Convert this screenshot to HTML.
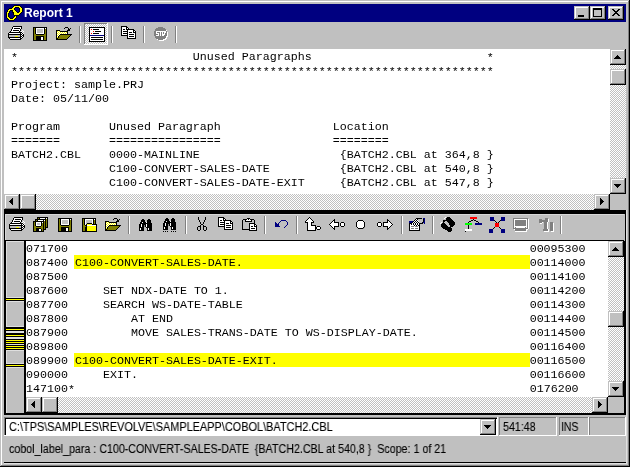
<!DOCTYPE html>
<html><head><meta charset="utf-8">
<style>
*{margin:0;padding:0;box-sizing:border-box}
html,body{width:630px;height:467px;overflow:hidden;background:#c0c0c0}
body{position:relative;font-family:"Liberation Sans",sans-serif;-webkit-font-smoothing:antialiased}
.a{position:absolute}
.mono{position:absolute;will-change:transform;font-family:"Liberation Mono",monospace;font-size:11.67px;line-height:14px;white-space:pre;color:#000}
.dith{background-color:#c0c0c0;background-image:conic-gradient(#fff 0 25%,#c0c0c0 0 50%,#fff 0 75%,#c0c0c0 0);background-size:2px 2px}
.rb{background:#c0c0c0;box-shadow:inset -1px -1px 0 #000,inset 1px 1px 0 #c0c0c0,inset -2px -2px 0 #808080,inset 2px 2px 0 #fff}
.sk{box-shadow:inset -1px -1px 0 #fff,inset 1px 1px 0 #808080}
.ui{position:absolute;white-space:pre;font-size:12px;line-height:14px;color:#000;transform-origin:0 0}
.ui,.tt{will-change:transform}
.ui{-webkit-text-stroke:0.1px #000}
.st{position:relative;top:1px}

svg{position:absolute;shape-rendering:crispEdges;overflow:visible}
</style></head><body>

<div class="a" style="left:0px;top:0px;width:630px;height:1px;background:#c0c0c0"></div><div class="a" style="left:0px;top:0px;width:1px;height:467px;background:#c0c0c0"></div>
<div class="a" style="left:1px;top:1px;width:628px;height:1px;background:#fff"></div><div class="a" style="left:1px;top:1px;width:1px;height:465px;background:#fff"></div>
<div class="a" style="left:629px;top:0px;width:1px;height:467px;background:#000"></div><div class="a" style="left:0px;top:466px;width:630px;height:1px;background:#000"></div>
<div class="a" style="left:628px;top:1px;width:1px;height:465px;background:#808080"></div><div class="a" style="left:1px;top:465px;width:628px;height:1px;background:#808080"></div>
<div class="a" style="left:4px;top:4px;width:622px;height:18px;background:#000080"></div>
<div class="a tt" style="left:24px;top:5px;color:#fff;font-weight:bold;font-size:12px;line-height:16px;white-space:pre">Report 1</div>
<svg style="left:6px;top:5px" width="17" height="16" viewBox="0 0 17 16"><rect x="8" y="0" width="6" height="1" fill="#000"/><rect x="7" y="1" width="1" height="1" fill="#000"/><rect x="8" y="1" width="6" height="1" fill="#ff0"/><rect x="14" y="1" width="1" height="1" fill="#000"/><rect x="6" y="2" width="1" height="1" fill="#000"/><rect x="7" y="2" width="2" height="1" fill="#ff0"/><rect x="9" y="2" width="4" height="1" fill="#000"/><rect x="13" y="2" width="2" height="1" fill="#ff0"/><rect x="15" y="2" width="1" height="1" fill="#000"/><rect x="3" y="3" width="3" height="1" fill="#000"/><rect x="6" y="3" width="2" height="1" fill="#ff0"/><rect x="8" y="3" width="1" height="1" fill="#000"/><rect x="13" y="3" width="1" height="1" fill="#000"/><rect x="14" y="3" width="2" height="1" fill="#ff0"/><rect x="16" y="3" width="1" height="1" fill="#000"/><rect x="2" y="4" width="1" height="1" fill="#000"/><rect x="3" y="4" width="5" height="1" fill="#ff0"/><rect x="8" y="4" width="1" height="1" fill="#000"/><rect x="13" y="4" width="1" height="1" fill="#000"/><rect x="14" y="4" width="2" height="1" fill="#ff0"/><rect x="16" y="4" width="1" height="1" fill="#000"/><rect x="1" y="5" width="1" height="1" fill="#000"/><rect x="2" y="5" width="2" height="1" fill="#ff0"/><rect x="4" y="5" width="3" height="1" fill="#000"/><rect x="7" y="5" width="2" height="1" fill="#ff0"/><rect x="9" y="5" width="1" height="1" fill="#000"/><rect x="13" y="5" width="1" height="1" fill="#000"/><rect x="14" y="5" width="2" height="1" fill="#ff0"/><rect x="16" y="5" width="1" height="1" fill="#000"/><rect x="1" y="6" width="1" height="1" fill="#000"/><rect x="2" y="6" width="1" height="1" fill="#ff0"/><rect x="3" y="6" width="1" height="1" fill="#000"/><rect x="6" y="6" width="1" height="1" fill="#000"/><rect x="7" y="6" width="3" height="1" fill="#ff0"/><rect x="10" y="6" width="1" height="1" fill="#000"/><rect x="13" y="6" width="1" height="1" fill="#000"/><rect x="14" y="6" width="2" height="1" fill="#ff0"/><rect x="16" y="6" width="1" height="1" fill="#000"/><rect x="0" y="7" width="1" height="1" fill="#000"/><rect x="1" y="7" width="2" height="1" fill="#ff0"/><rect x="3" y="7" width="1" height="1" fill="#000"/><rect x="6" y="7" width="2" height="1" fill="#000"/><rect x="8" y="7" width="3" height="1" fill="#ff0"/><rect x="11" y="7" width="2" height="1" fill="#000"/><rect x="13" y="7" width="2" height="1" fill="#ff0"/><rect x="15" y="7" width="1" height="1" fill="#000"/><rect x="0" y="8" width="1" height="1" fill="#000"/><rect x="1" y="8" width="1" height="1" fill="#ff0"/><rect x="2" y="8" width="1" height="1" fill="#000"/><rect x="7" y="8" width="1" height="1" fill="#000"/><rect x="8" y="8" width="6" height="1" fill="#ff0"/><rect x="14" y="8" width="1" height="1" fill="#000"/><rect x="0" y="9" width="1" height="1" fill="#000"/><rect x="1" y="9" width="1" height="1" fill="#ff0"/><rect x="2" y="9" width="1" height="1" fill="#000"/><rect x="7" y="9" width="1" height="1" fill="#000"/><rect x="8" y="9" width="5" height="1" fill="#ff0"/><rect x="13" y="9" width="1" height="1" fill="#000"/><rect x="0" y="10" width="1" height="1" fill="#000"/><rect x="1" y="10" width="1" height="1" fill="#ff0"/><rect x="2" y="10" width="1" height="1" fill="#000"/><rect x="8" y="10" width="5" height="1" fill="#000"/><rect x="0" y="11" width="1" height="1" fill="#000"/><rect x="1" y="11" width="1" height="1" fill="#ff0"/><rect x="2" y="11" width="1" height="1" fill="#000"/><rect x="8" y="11" width="1" height="1" fill="#000"/><rect x="9" y="11" width="1" height="1" fill="#ff0"/><rect x="10" y="11" width="1" height="1" fill="#000"/><rect x="0" y="12" width="1" height="1" fill="#000"/><rect x="1" y="12" width="2" height="1" fill="#ff0"/><rect x="3" y="12" width="1" height="1" fill="#000"/><rect x="7" y="12" width="1" height="1" fill="#000"/><rect x="8" y="12" width="2" height="1" fill="#ff0"/><rect x="10" y="12" width="1" height="1" fill="#000"/><rect x="1" y="13" width="1" height="1" fill="#000"/><rect x="2" y="13" width="2" height="1" fill="#ff0"/><rect x="4" y="13" width="3" height="1" fill="#000"/><rect x="7" y="13" width="2" height="1" fill="#ff0"/><rect x="9" y="13" width="1" height="1" fill="#000"/><rect x="2" y="14" width="1" height="1" fill="#000"/><rect x="3" y="14" width="5" height="1" fill="#ff0"/><rect x="8" y="14" width="1" height="1" fill="#000"/><rect x="3" y="15" width="5" height="1" fill="#000"/></svg>
<div class="a rb" style="left:574px;top:6px;width:16px;height:14px;"></div>
<div class="a rb" style="left:590px;top:6px;width:16px;height:14px;"></div>
<div class="a rb" style="left:608px;top:6px;width:16px;height:14px;"></div>
<div class="a" style="left:578px;top:15px;width:6px;height:2px;background:#000"></div>
<div class="a" style="left:593px;top:8px;width:9px;height:9px;background:#000"></div><div class="a" style="left:594px;top:10px;width:7px;height:6px;background:#c0c0c0"></div>
<svg style="left:612px;top:9px" width="8" height="7" viewBox="0 0 8 7"><rect x="0" y="0" width="2" height="1" fill="#000"/><rect x="6" y="0" width="2" height="1" fill="#000"/><rect x="1" y="1" width="2" height="1" fill="#000"/><rect x="5" y="1" width="2" height="1" fill="#000"/><rect x="2" y="2" width="4" height="1" fill="#000"/><rect x="3" y="3" width="2" height="1" fill="#000"/><rect x="2" y="4" width="4" height="1" fill="#000"/><rect x="1" y="5" width="2" height="1" fill="#000"/><rect x="5" y="5" width="2" height="1" fill="#000"/><rect x="0" y="6" width="2" height="1" fill="#000"/><rect x="6" y="6" width="2" height="1" fill="#000"/></svg>
<svg style="left:8px;top:26px" width="16" height="14" viewBox="0 0 16 14"><rect x="5" y="0" width="9" height="1" fill="#000"/><rect x="4" y="1" width="1" height="1" fill="#000"/><rect x="5" y="1" width="8" height="1" fill="#fff"/><rect x="13" y="1" width="1" height="1" fill="#000"/><rect x="4" y="2" width="1" height="1" fill="#000"/><rect x="5" y="2" width="1" height="1" fill="#fff"/><rect x="6" y="2" width="6" height="1" fill="#000"/><rect x="12" y="2" width="1" height="1" fill="#fff"/><rect x="13" y="2" width="1" height="1" fill="#000"/><rect x="3" y="3" width="1" height="1" fill="#000"/><rect x="4" y="3" width="8" height="1" fill="#fff"/><rect x="12" y="3" width="1" height="1" fill="#000"/><rect x="3" y="4" width="1" height="1" fill="#000"/><rect x="4" y="4" width="1" height="1" fill="#fff"/><rect x="5" y="4" width="6" height="1" fill="#000"/><rect x="11" y="4" width="1" height="1" fill="#fff"/><rect x="12" y="4" width="1" height="1" fill="#000"/><rect x="14" y="4" width="1" height="1" fill="#fff"/><rect x="2" y="5" width="1" height="1" fill="#000"/><rect x="3" y="5" width="8" height="1" fill="#fff"/><rect x="11" y="5" width="1" height="1" fill="#000"/><rect x="13" y="5" width="1" height="1" fill="#fff"/><rect x="15" y="5" width="1" height="1" fill="#fff"/><rect x="1" y="6" width="13" height="1" fill="#000"/><rect x="14" y="6" width="1" height="1" fill="#fff"/><rect x="0" y="7" width="1" height="1" fill="#000"/><rect x="1" y="7" width="11" height="1" fill="#fff"/><rect x="12" y="7" width="1" height="1" fill="#000"/><rect x="13" y="7" width="1" height="1" fill="#fff"/><rect x="14" y="7" width="1" height="1" fill="#000"/><rect x="15" y="7" width="1" height="1" fill="#fff"/><rect x="0" y="8" width="14" height="1" fill="#000"/><rect x="14" y="8" width="1" height="1" fill="#fff"/><rect x="15" y="8" width="1" height="1" fill="#000"/><rect x="0" y="9" width="1" height="1" fill="#000"/><rect x="1" y="9" width="11" height="1" fill="#c0c0c0"/><rect x="12" y="9" width="1" height="1" fill="#000"/><rect x="13" y="9" width="1" height="1" fill="#fff"/><rect x="14" y="9" width="2" height="1" fill="#000"/><rect x="0" y="10" width="1" height="1" fill="#000"/><rect x="1" y="10" width="6" height="1" fill="#c0c0c0"/><rect x="7" y="10" width="3" height="1" fill="#ff0"/><rect x="10" y="10" width="2" height="1" fill="#c0c0c0"/><rect x="12" y="10" width="2" height="1" fill="#000"/><rect x="14" y="10" width="1" height="1" fill="#fff"/><rect x="15" y="10" width="1" height="1" fill="#000"/><rect x="0" y="11" width="13" height="1" fill="#000"/><rect x="13" y="11" width="1" height="1" fill="#fff"/><rect x="14" y="11" width="1" height="1" fill="#000"/><rect x="1" y="12" width="1" height="1" fill="#000"/><rect x="2" y="12" width="10" height="1" fill="#fff"/><rect x="12" y="12" width="2" height="1" fill="#000"/><rect x="2" y="13" width="11" height="1" fill="#000"/></svg>
<svg style="left:33px;top:27px" width="14" height="14" viewBox="0 0 14 14"><rect x="0" y="0" width="14" height="1" fill="#000"/><rect x="0" y="1" width="1" height="1" fill="#000"/><rect x="1" y="1" width="1" height="1" fill="#808000"/><rect x="2" y="1" width="1" height="1" fill="#000"/><rect x="3" y="1" width="8" height="1" fill="#fff"/><rect x="11" y="1" width="1" height="1" fill="#000"/><rect x="12" y="1" width="1" height="1" fill="#fff"/><rect x="13" y="1" width="1" height="1" fill="#000"/><rect x="0" y="2" width="1" height="1" fill="#000"/><rect x="1" y="2" width="1" height="1" fill="#808000"/><rect x="2" y="2" width="1" height="1" fill="#000"/><rect x="3" y="2" width="1" height="1" fill="#fff"/><rect x="4" y="2" width="6" height="1" fill="#c0c0c0"/><rect x="10" y="2" width="1" height="1" fill="#fff"/><rect x="11" y="2" width="1" height="1" fill="#000"/><rect x="12" y="2" width="1" height="1" fill="#808000"/><rect x="13" y="2" width="1" height="1" fill="#000"/><rect x="0" y="3" width="1" height="1" fill="#000"/><rect x="1" y="3" width="1" height="1" fill="#808000"/><rect x="2" y="3" width="1" height="1" fill="#000"/><rect x="3" y="3" width="1" height="1" fill="#fff"/><rect x="4" y="3" width="6" height="1" fill="#c0c0c0"/><rect x="10" y="3" width="1" height="1" fill="#fff"/><rect x="11" y="3" width="1" height="1" fill="#000"/><rect x="12" y="3" width="1" height="1" fill="#808000"/><rect x="13" y="3" width="1" height="1" fill="#000"/><rect x="0" y="4" width="1" height="1" fill="#000"/><rect x="1" y="4" width="1" height="1" fill="#808000"/><rect x="2" y="4" width="1" height="1" fill="#000"/><rect x="3" y="4" width="1" height="1" fill="#fff"/><rect x="4" y="4" width="6" height="1" fill="#c0c0c0"/><rect x="10" y="4" width="1" height="1" fill="#fff"/><rect x="11" y="4" width="1" height="1" fill="#000"/><rect x="12" y="4" width="1" height="1" fill="#808000"/><rect x="13" y="4" width="1" height="1" fill="#000"/><rect x="0" y="5" width="1" height="1" fill="#000"/><rect x="1" y="5" width="1" height="1" fill="#808000"/><rect x="2" y="5" width="1" height="1" fill="#000"/><rect x="3" y="5" width="1" height="1" fill="#fff"/><rect x="4" y="5" width="6" height="1" fill="#c0c0c0"/><rect x="10" y="5" width="1" height="1" fill="#fff"/><rect x="11" y="5" width="1" height="1" fill="#000"/><rect x="12" y="5" width="1" height="1" fill="#808000"/><rect x="13" y="5" width="1" height="1" fill="#000"/><rect x="0" y="6" width="1" height="1" fill="#000"/><rect x="1" y="6" width="1" height="1" fill="#808000"/><rect x="2" y="6" width="1" height="1" fill="#000"/><rect x="3" y="6" width="8" height="1" fill="#fff"/><rect x="11" y="6" width="1" height="1" fill="#000"/><rect x="12" y="6" width="1" height="1" fill="#808000"/><rect x="13" y="6" width="1" height="1" fill="#000"/><rect x="0" y="7" width="1" height="1" fill="#000"/><rect x="1" y="7" width="2" height="1" fill="#808000"/><rect x="3" y="7" width="8" height="1" fill="#000"/><rect x="11" y="7" width="2" height="1" fill="#808000"/><rect x="13" y="7" width="1" height="1" fill="#000"/><rect x="0" y="8" width="1" height="1" fill="#000"/><rect x="1" y="8" width="12" height="1" fill="#808000"/><rect x="13" y="8" width="1" height="1" fill="#000"/><rect x="0" y="9" width="1" height="1" fill="#000"/><rect x="1" y="9" width="2" height="1" fill="#808000"/><rect x="3" y="9" width="8" height="1" fill="#000"/><rect x="11" y="9" width="2" height="1" fill="#808000"/><rect x="13" y="9" width="1" height="1" fill="#000"/><rect x="0" y="10" width="1" height="1" fill="#000"/><rect x="1" y="10" width="2" height="1" fill="#808000"/><rect x="3" y="10" width="5" height="1" fill="#000"/><rect x="8" y="10" width="2" height="1" fill="#fff"/><rect x="10" y="10" width="1" height="1" fill="#000"/><rect x="11" y="10" width="2" height="1" fill="#808000"/><rect x="13" y="10" width="1" height="1" fill="#000"/><rect x="0" y="11" width="1" height="1" fill="#000"/><rect x="1" y="11" width="2" height="1" fill="#808000"/><rect x="3" y="11" width="5" height="1" fill="#000"/><rect x="8" y="11" width="2" height="1" fill="#fff"/><rect x="10" y="11" width="1" height="1" fill="#000"/><rect x="11" y="11" width="2" height="1" fill="#808000"/><rect x="13" y="11" width="1" height="1" fill="#000"/><rect x="0" y="12" width="1" height="1" fill="#000"/><rect x="1" y="12" width="2" height="1" fill="#808000"/><rect x="3" y="12" width="5" height="1" fill="#000"/><rect x="8" y="12" width="2" height="1" fill="#fff"/><rect x="10" y="12" width="1" height="1" fill="#000"/><rect x="11" y="12" width="2" height="1" fill="#808000"/><rect x="13" y="12" width="1" height="1" fill="#000"/><rect x="0" y="13" width="14" height="1" fill="#000"/></svg>
<svg style="left:56px;top:27px" width="16" height="13" viewBox="0 0 16 13"><rect x="9" y="0" width="3" height="1" fill="#000"/><rect x="8" y="1" width="1" height="1" fill="#000"/><rect x="12" y="1" width="1" height="1" fill="#000"/><rect x="14" y="1" width="1" height="1" fill="#000"/><rect x="12" y="2" width="2" height="1" fill="#000"/><rect x="0" y="3" width="4" height="1" fill="#000"/><rect x="11" y="3" width="3" height="1" fill="#000"/><rect x="0" y="4" width="1" height="1" fill="#000"/><rect x="1" y="4" width="1" height="1" fill="#ff0"/><rect x="2" y="4" width="1" height="1" fill="#fff"/><rect x="3" y="4" width="1" height="1" fill="#ff0"/><rect x="4" y="4" width="8" height="1" fill="#000"/><rect x="0" y="5" width="1" height="1" fill="#000"/><rect x="1" y="5" width="1" height="1" fill="#fff"/><rect x="2" y="5" width="1" height="1" fill="#ff0"/><rect x="3" y="5" width="1" height="1" fill="#fff"/><rect x="4" y="5" width="1" height="1" fill="#ff0"/><rect x="5" y="5" width="1" height="1" fill="#fff"/><rect x="6" y="5" width="1" height="1" fill="#ff0"/><rect x="7" y="5" width="1" height="1" fill="#fff"/><rect x="8" y="5" width="1" height="1" fill="#ff0"/><rect x="9" y="5" width="1" height="1" fill="#fff"/><rect x="10" y="5" width="1" height="1" fill="#ff0"/><rect x="11" y="5" width="1" height="1" fill="#000"/><rect x="0" y="6" width="1" height="1" fill="#000"/><rect x="1" y="6" width="1" height="1" fill="#ff0"/><rect x="2" y="6" width="1" height="1" fill="#fff"/><rect x="3" y="6" width="1" height="1" fill="#ff0"/><rect x="4" y="6" width="1" height="1" fill="#fff"/><rect x="5" y="6" width="1" height="1" fill="#ff0"/><rect x="6" y="6" width="1" height="1" fill="#fff"/><rect x="7" y="6" width="1" height="1" fill="#ff0"/><rect x="8" y="6" width="1" height="1" fill="#fff"/><rect x="9" y="6" width="1" height="1" fill="#ff0"/><rect x="10" y="6" width="1" height="1" fill="#fff"/><rect x="11" y="6" width="1" height="1" fill="#000"/><rect x="0" y="7" width="1" height="1" fill="#000"/><rect x="1" y="7" width="1" height="1" fill="#fff"/><rect x="2" y="7" width="1" height="1" fill="#ff0"/><rect x="3" y="7" width="1" height="1" fill="#fff"/><rect x="4" y="7" width="12" height="1" fill="#000"/><rect x="0" y="8" width="1" height="1" fill="#000"/><rect x="1" y="8" width="1" height="1" fill="#ff0"/><rect x="2" y="8" width="1" height="1" fill="#fff"/><rect x="3" y="8" width="1" height="1" fill="#000"/><rect x="4" y="8" width="10" height="1" fill="#808000"/><rect x="14" y="8" width="1" height="1" fill="#000"/><rect x="0" y="9" width="1" height="1" fill="#000"/><rect x="1" y="9" width="1" height="1" fill="#fff"/><rect x="2" y="9" width="1" height="1" fill="#000"/><rect x="3" y="9" width="10" height="1" fill="#808000"/><rect x="13" y="9" width="1" height="1" fill="#000"/><rect x="0" y="10" width="1" height="1" fill="#000"/><rect x="1" y="10" width="1" height="1" fill="#ff0"/><rect x="2" y="10" width="1" height="1" fill="#000"/><rect x="3" y="10" width="9" height="1" fill="#808000"/><rect x="12" y="10" width="1" height="1" fill="#000"/><rect x="0" y="11" width="2" height="1" fill="#000"/><rect x="2" y="11" width="9" height="1" fill="#808000"/><rect x="11" y="11" width="1" height="1" fill="#000"/><rect x="0" y="12" width="11" height="1" fill="#000"/></svg>
<div class="a" style="left:79px;top:26px;width:1px;height:17px;background:#808080"></div><div class="a" style="left:80px;top:26px;width:1px;height:17px;background:#fff"></div>
<div class="a dith" style="left:84px;top:23px;width:24px;height:22px;box-shadow:inset -1px -1px 0 #fff,inset 1px 1px 0 #808080"></div>
<svg style="left:89px;top:27px" width="16" height="15" viewBox="0 0 16 15"><rect x="0" y="0" width="16" height="1" fill="#000"/><rect x="0" y="1" width="1" height="1" fill="#000"/><rect x="1" y="1" width="14" height="1" fill="#fff"/><rect x="15" y="1" width="1" height="1" fill="#000"/><rect x="0" y="2" width="1" height="1" fill="#000"/><rect x="1" y="2" width="1" height="1" fill="#fff"/><rect x="2" y="2" width="1" height="1" fill="#f00"/><rect x="3" y="2" width="1" height="1" fill="#fff"/><rect x="4" y="2" width="6" height="1" fill="#000"/><rect x="10" y="2" width="5" height="1" fill="#fff"/><rect x="15" y="2" width="1" height="1" fill="#000"/><rect x="0" y="3" width="1" height="1" fill="#000"/><rect x="1" y="3" width="14" height="1" fill="#fff"/><rect x="15" y="3" width="1" height="1" fill="#000"/><rect x="0" y="4" width="1" height="1" fill="#000"/><rect x="1" y="4" width="3" height="1" fill="#fff"/><rect x="4" y="4" width="1" height="1" fill="#f00"/><rect x="5" y="4" width="1" height="1" fill="#fff"/><rect x="6" y="4" width="6" height="1" fill="#000"/><rect x="12" y="4" width="3" height="1" fill="#fff"/><rect x="15" y="4" width="1" height="1" fill="#000"/><rect x="0" y="5" width="1" height="1" fill="#000"/><rect x="1" y="5" width="14" height="1" fill="#fff"/><rect x="15" y="5" width="1" height="1" fill="#000"/><rect x="0" y="6" width="1" height="1" fill="#000"/><rect x="1" y="6" width="1" height="1" fill="#fff"/><rect x="2" y="6" width="1" height="1" fill="#f00"/><rect x="3" y="6" width="1" height="1" fill="#fff"/><rect x="4" y="6" width="6" height="1" fill="#000"/><rect x="10" y="6" width="5" height="1" fill="#fff"/><rect x="15" y="6" width="1" height="1" fill="#000"/><rect x="0" y="7" width="1" height="1" fill="#000"/><rect x="1" y="7" width="14" height="1" fill="#fff"/><rect x="15" y="7" width="1" height="1" fill="#000"/><rect x="0" y="8" width="1" height="1" fill="#000"/><rect x="1" y="8" width="14" height="1" fill="#000080"/><rect x="15" y="8" width="1" height="1" fill="#000"/><rect x="0" y="9" width="1" height="1" fill="#000"/><rect x="1" y="9" width="14" height="1" fill="#fff"/><rect x="15" y="9" width="1" height="1" fill="#000"/><rect x="0" y="10" width="1" height="1" fill="#000"/><rect x="1" y="10" width="1" height="1" fill="#fff"/><rect x="2" y="10" width="12" height="1" fill="#000"/><rect x="14" y="10" width="1" height="1" fill="#fff"/><rect x="15" y="10" width="1" height="1" fill="#000"/><rect x="0" y="11" width="1" height="1" fill="#000"/><rect x="1" y="11" width="14" height="1" fill="#fff"/><rect x="15" y="11" width="1" height="1" fill="#000"/><rect x="0" y="12" width="1" height="1" fill="#000"/><rect x="1" y="12" width="1" height="1" fill="#fff"/><rect x="2" y="12" width="12" height="1" fill="#000"/><rect x="14" y="12" width="1" height="1" fill="#fff"/><rect x="15" y="12" width="1" height="1" fill="#000"/><rect x="0" y="13" width="1" height="1" fill="#000"/><rect x="1" y="13" width="14" height="1" fill="#fff"/><rect x="15" y="13" width="1" height="1" fill="#000"/><rect x="0" y="14" width="16" height="1" fill="#000"/></svg>
<div class="a" style="left:111px;top:26px;width:1px;height:17px;background:#808080"></div><div class="a" style="left:112px;top:26px;width:1px;height:17px;background:#fff"></div>
<svg style="left:121px;top:26px" width="15" height="13" viewBox="0 0 15 13"><rect x="0" y="0" width="6" height="1" fill="#000"/><rect x="0" y="1" width="1" height="1" fill="#000"/><rect x="1" y="1" width="4" height="1" fill="#fff"/><rect x="5" y="1" width="2" height="1" fill="#000"/><rect x="0" y="2" width="1" height="1" fill="#000"/><rect x="1" y="2" width="4" height="1" fill="#fff"/><rect x="5" y="2" width="1" height="1" fill="#000"/><rect x="6" y="2" width="1" height="1" fill="#fff"/><rect x="7" y="2" width="1" height="1" fill="#000"/><rect x="0" y="3" width="1" height="1" fill="#000"/><rect x="1" y="3" width="1" height="1" fill="#fff"/><rect x="2" y="3" width="2" height="1" fill="#000"/><rect x="4" y="3" width="1" height="1" fill="#fff"/><rect x="5" y="3" width="8" height="1" fill="#000"/><rect x="0" y="4" width="1" height="1" fill="#000"/><rect x="1" y="4" width="5" height="1" fill="#fff"/><rect x="6" y="4" width="1" height="1" fill="#000"/><rect x="7" y="4" width="5" height="1" fill="#fff"/><rect x="12" y="4" width="2" height="1" fill="#000"/><rect x="0" y="5" width="1" height="1" fill="#000"/><rect x="1" y="5" width="1" height="1" fill="#fff"/><rect x="2" y="5" width="5" height="1" fill="#000"/><rect x="7" y="5" width="5" height="1" fill="#fff"/><rect x="12" y="5" width="1" height="1" fill="#000"/><rect x="13" y="5" width="1" height="1" fill="#fff"/><rect x="14" y="5" width="1" height="1" fill="#000"/><rect x="0" y="6" width="1" height="1" fill="#000"/><rect x="1" y="6" width="5" height="1" fill="#fff"/><rect x="6" y="6" width="1" height="1" fill="#000"/><rect x="7" y="6" width="1" height="1" fill="#fff"/><rect x="8" y="6" width="3" height="1" fill="#000"/><rect x="11" y="6" width="1" height="1" fill="#fff"/><rect x="12" y="6" width="3" height="1" fill="#000"/><rect x="0" y="7" width="1" height="1" fill="#000"/><rect x="1" y="7" width="1" height="1" fill="#fff"/><rect x="2" y="7" width="5" height="1" fill="#000"/><rect x="7" y="7" width="7" height="1" fill="#fff"/><rect x="14" y="7" width="1" height="1" fill="#000"/><rect x="0" y="8" width="1" height="1" fill="#000"/><rect x="1" y="8" width="5" height="1" fill="#fff"/><rect x="6" y="8" width="1" height="1" fill="#000"/><rect x="7" y="8" width="1" height="1" fill="#fff"/><rect x="8" y="8" width="5" height="1" fill="#000"/><rect x="13" y="8" width="1" height="1" fill="#fff"/><rect x="14" y="8" width="1" height="1" fill="#000"/><rect x="0" y="9" width="7" height="1" fill="#000"/><rect x="7" y="9" width="7" height="1" fill="#fff"/><rect x="14" y="9" width="1" height="1" fill="#000"/><rect x="6" y="10" width="1" height="1" fill="#000"/><rect x="7" y="10" width="1" height="1" fill="#fff"/><rect x="8" y="10" width="5" height="1" fill="#000"/><rect x="13" y="10" width="1" height="1" fill="#fff"/><rect x="14" y="10" width="1" height="1" fill="#000"/><rect x="6" y="11" width="1" height="1" fill="#000"/><rect x="7" y="11" width="7" height="1" fill="#fff"/><rect x="14" y="11" width="1" height="1" fill="#000"/><rect x="6" y="12" width="9" height="1" fill="#000"/></svg>
<div class="a" style="left:143px;top:26px;width:1px;height:17px;background:#808080"></div><div class="a" style="left:144px;top:26px;width:1px;height:17px;background:#fff"></div>
<svg style="left:154px;top:27px" width="14" height="14" viewBox="0 0 14 14"><rect x="4" y="0" width="5" height="1" fill="#808080"/><rect x="2" y="1" width="9" height="1" fill="#808080"/><rect x="1" y="2" width="11" height="1" fill="#808080"/><rect x="1" y="3" width="11" height="1" fill="#808080"/><rect x="12" y="3" width="1" height="1" fill="#fff"/><rect x="0" y="4" width="2" height="1" fill="#808080"/><rect x="2" y="4" width="10" height="1" fill="#fff"/><rect x="12" y="4" width="1" height="1" fill="#808080"/><rect x="0" y="5" width="2" height="1" fill="#808080"/><rect x="2" y="5" width="1" height="1" fill="#fff"/><rect x="3" y="5" width="3" height="1" fill="#808080"/><rect x="6" y="5" width="1" height="1" fill="#fff"/><rect x="7" y="5" width="1" height="1" fill="#808080"/><rect x="8" y="5" width="1" height="1" fill="#fff"/><rect x="9" y="5" width="1" height="1" fill="#808080"/><rect x="10" y="5" width="2" height="1" fill="#fff"/><rect x="12" y="5" width="1" height="1" fill="#808080"/><rect x="13" y="5" width="1" height="1" fill="#fff"/><rect x="0" y="6" width="2" height="1" fill="#808080"/><rect x="2" y="6" width="3" height="1" fill="#fff"/><rect x="5" y="6" width="1" height="1" fill="#808080"/><rect x="6" y="6" width="1" height="1" fill="#fff"/><rect x="7" y="6" width="1" height="1" fill="#808080"/><rect x="8" y="6" width="1" height="1" fill="#fff"/><rect x="9" y="6" width="1" height="1" fill="#808080"/><rect x="10" y="6" width="1" height="1" fill="#fff"/><rect x="11" y="6" width="2" height="1" fill="#808080"/><rect x="13" y="6" width="1" height="1" fill="#fff"/><rect x="0" y="7" width="4" height="1" fill="#808080"/><rect x="4" y="7" width="1" height="1" fill="#fff"/><rect x="5" y="7" width="1" height="1" fill="#808080"/><rect x="6" y="7" width="1" height="1" fill="#fff"/><rect x="7" y="7" width="1" height="1" fill="#808080"/><rect x="8" y="7" width="3" height="1" fill="#fff"/><rect x="11" y="7" width="2" height="1" fill="#808080"/><rect x="13" y="7" width="1" height="1" fill="#fff"/><rect x="0" y="8" width="2" height="1" fill="#808080"/><rect x="2" y="8" width="3" height="1" fill="#fff"/><rect x="5" y="8" width="1" height="1" fill="#808080"/><rect x="6" y="8" width="1" height="1" fill="#fff"/><rect x="7" y="8" width="1" height="1" fill="#808080"/><rect x="8" y="8" width="2" height="1" fill="#fff"/><rect x="10" y="8" width="3" height="1" fill="#808080"/><rect x="13" y="8" width="1" height="1" fill="#fff"/><rect x="1" y="9" width="11" height="1" fill="#808080"/><rect x="12" y="9" width="2" height="1" fill="#fff"/><rect x="1" y="10" width="11" height="1" fill="#808080"/><rect x="12" y="10" width="1" height="1" fill="#fff"/><rect x="2" y="11" width="9" height="1" fill="#808080"/><rect x="11" y="11" width="2" height="1" fill="#fff"/><rect x="3" y="12" width="1" height="1" fill="#fff"/><rect x="4" y="12" width="5" height="1" fill="#808080"/><rect x="9" y="12" width="3" height="1" fill="#fff"/><rect x="5" y="13" width="5" height="1" fill="#fff"/></svg>
<div class="a" style="left:175px;top:26px;width:1px;height:17px;background:#808080"></div><div class="a" style="left:176px;top:26px;width:1px;height:17px;background:#fff"></div>
<div class="a" style="left:4px;top:49px;width:606px;height:145px;background:#fff"></div>
<div class="mono" style="left:11px;top:50px"><span class="st">*</span>                         Unused Paragraphs                         <span class="st">*</span>
<span class="st">*********************************************************************</span>
Project: sample.PRJ
Date: 05/11/00

Program       Unused Paragraph                Location
=======       ================                ========
BATCH2.CBL    0000-MAINLINE                    {BATCH2.CBL at 364,8 }
              C100-CONVERT-SALES-DATE          {BATCH2.CBL at 540,8 }
              C100-CONVERT-SALES-DATE-EXIT     {BATCH2.CBL at 547,8 }</div>
<div class="a dith" style="left:610px;top:49px;width:16px;height:145px"></div>
<div class="a rb" style="left:610px;top:49px;width:16px;height:16px;"></div><svg style="left:614px;top:55px" width="7" height="4" viewBox="0 0 7 4"><rect x="3" y="0" width="1" height="1" fill="#000"/><rect x="2" y="1" width="3" height="1" fill="#000"/><rect x="1" y="2" width="5" height="1" fill="#000"/><rect x="0" y="3" width="7" height="1" fill="#000"/></svg>
<div class="a rb" style="left:610px;top:69px;width:16px;height:16px;"></div>
<div class="a rb" style="left:610px;top:178px;width:16px;height:16px;"></div><svg style="left:614px;top:184px" width="7" height="4" viewBox="0 0 7 4"><rect x="0" y="0" width="7" height="1" fill="#000"/><rect x="1" y="1" width="5" height="1" fill="#000"/><rect x="2" y="2" width="3" height="1" fill="#000"/><rect x="3" y="3" width="1" height="1" fill="#000"/></svg>
<div class="a dith" style="left:4px;top:194px;width:606px;height:16px"></div>
<div class="a rb" style="left:4px;top:194px;width:16px;height:16px;"></div><svg style="left:9px;top:198px" width="4" height="7" viewBox="0 0 4 7"><rect x="3" y="0" width="1" height="1" fill="#000"/><rect x="2" y="1" width="2" height="1" fill="#000"/><rect x="1" y="2" width="3" height="1" fill="#000"/><rect x="0" y="3" width="4" height="1" fill="#000"/><rect x="1" y="4" width="3" height="1" fill="#000"/><rect x="2" y="5" width="2" height="1" fill="#000"/><rect x="3" y="6" width="1" height="1" fill="#000"/></svg>
<div class="a rb" style="left:20px;top:194px;width:16px;height:16px;"></div>
<div class="a rb" style="left:594px;top:194px;width:16px;height:16px;"></div><svg style="left:600px;top:198px" width="4" height="7" viewBox="0 0 4 7"><rect x="0" y="0" width="1" height="1" fill="#000"/><rect x="0" y="1" width="2" height="1" fill="#000"/><rect x="0" y="2" width="3" height="1" fill="#000"/><rect x="0" y="3" width="4" height="1" fill="#000"/><rect x="0" y="4" width="3" height="1" fill="#000"/><rect x="0" y="5" width="2" height="1" fill="#000"/><rect x="0" y="6" width="1" height="1" fill="#000"/></svg>
<div class="a" style="left:610px;top:194px;width:16px;height:16px;background:#c0c0c0"></div>
<div class="a" style="left:4px;top:210px;width:622px;height:4px;background:#000"></div>
<div class="a" style="left:4px;top:210px;width:1px;height:205px;background:#000"></div>
<div class="a" style="left:625px;top:214px;width:1px;height:201px;background:#000"></div><div class="a" style="left:624px;top:241px;width:1px;height:174px;background:#000"></div>
<div class="a" style="left:5px;top:214px;width:619px;height:1px;background:#d8d8d8"></div><div class="a" style="left:5px;top:214px;width:1px;height:26px;background:#d8d8d8"></div>
<svg style="left:9px;top:217px" width="16" height="14" viewBox="0 0 16 14"><rect x="5" y="0" width="9" height="1" fill="#000"/><rect x="4" y="1" width="1" height="1" fill="#000"/><rect x="5" y="1" width="8" height="1" fill="#fff"/><rect x="13" y="1" width="1" height="1" fill="#000"/><rect x="4" y="2" width="1" height="1" fill="#000"/><rect x="5" y="2" width="1" height="1" fill="#fff"/><rect x="6" y="2" width="6" height="1" fill="#000"/><rect x="12" y="2" width="1" height="1" fill="#fff"/><rect x="13" y="2" width="1" height="1" fill="#000"/><rect x="3" y="3" width="1" height="1" fill="#000"/><rect x="4" y="3" width="8" height="1" fill="#fff"/><rect x="12" y="3" width="1" height="1" fill="#000"/><rect x="3" y="4" width="1" height="1" fill="#000"/><rect x="4" y="4" width="1" height="1" fill="#fff"/><rect x="5" y="4" width="6" height="1" fill="#000"/><rect x="11" y="4" width="1" height="1" fill="#fff"/><rect x="12" y="4" width="1" height="1" fill="#000"/><rect x="14" y="4" width="1" height="1" fill="#fff"/><rect x="2" y="5" width="1" height="1" fill="#000"/><rect x="3" y="5" width="8" height="1" fill="#fff"/><rect x="11" y="5" width="1" height="1" fill="#000"/><rect x="13" y="5" width="1" height="1" fill="#fff"/><rect x="15" y="5" width="1" height="1" fill="#fff"/><rect x="1" y="6" width="13" height="1" fill="#000"/><rect x="14" y="6" width="1" height="1" fill="#fff"/><rect x="0" y="7" width="1" height="1" fill="#000"/><rect x="1" y="7" width="11" height="1" fill="#fff"/><rect x="12" y="7" width="1" height="1" fill="#000"/><rect x="13" y="7" width="1" height="1" fill="#fff"/><rect x="14" y="7" width="1" height="1" fill="#000"/><rect x="15" y="7" width="1" height="1" fill="#fff"/><rect x="0" y="8" width="14" height="1" fill="#000"/><rect x="14" y="8" width="1" height="1" fill="#fff"/><rect x="15" y="8" width="1" height="1" fill="#000"/><rect x="0" y="9" width="1" height="1" fill="#000"/><rect x="1" y="9" width="11" height="1" fill="#c0c0c0"/><rect x="12" y="9" width="1" height="1" fill="#000"/><rect x="13" y="9" width="1" height="1" fill="#fff"/><rect x="14" y="9" width="2" height="1" fill="#000"/><rect x="0" y="10" width="1" height="1" fill="#000"/><rect x="1" y="10" width="6" height="1" fill="#c0c0c0"/><rect x="7" y="10" width="3" height="1" fill="#ff0"/><rect x="10" y="10" width="2" height="1" fill="#c0c0c0"/><rect x="12" y="10" width="2" height="1" fill="#000"/><rect x="14" y="10" width="1" height="1" fill="#fff"/><rect x="15" y="10" width="1" height="1" fill="#000"/><rect x="0" y="11" width="13" height="1" fill="#000"/><rect x="13" y="11" width="1" height="1" fill="#fff"/><rect x="14" y="11" width="1" height="1" fill="#000"/><rect x="1" y="12" width="1" height="1" fill="#000"/><rect x="2" y="12" width="10" height="1" fill="#fff"/><rect x="12" y="12" width="2" height="1" fill="#000"/><rect x="2" y="13" width="11" height="1" fill="#000"/></svg>
<svg style="left:33px;top:217px" width="15" height="15" viewBox="0 0 15 15"><rect x="4" y="0" width="11" height="1" fill="#000"/><rect x="4" y="1" width="1" height="1" fill="#000"/><rect x="5" y="1" width="1" height="1" fill="#808000"/><rect x="6" y="1" width="1" height="1" fill="#000"/><rect x="7" y="1" width="5" height="1" fill="#fff"/><rect x="12" y="1" width="1" height="1" fill="#000"/><rect x="13" y="1" width="1" height="1" fill="#fff"/><rect x="14" y="1" width="1" height="1" fill="#000"/><rect x="2" y="2" width="11" height="1" fill="#000"/><rect x="13" y="2" width="1" height="1" fill="#808000"/><rect x="14" y="2" width="1" height="1" fill="#000"/><rect x="2" y="3" width="1" height="1" fill="#000"/><rect x="3" y="3" width="1" height="1" fill="#808000"/><rect x="4" y="3" width="1" height="1" fill="#000"/><rect x="5" y="3" width="5" height="1" fill="#fff"/><rect x="10" y="3" width="1" height="1" fill="#000"/><rect x="11" y="3" width="1" height="1" fill="#fff"/><rect x="12" y="3" width="1" height="1" fill="#000"/><rect x="13" y="3" width="1" height="1" fill="#808000"/><rect x="14" y="3" width="1" height="1" fill="#000"/><rect x="0" y="4" width="11" height="1" fill="#000"/><rect x="11" y="4" width="1" height="1" fill="#808000"/><rect x="12" y="4" width="1" height="1" fill="#000"/><rect x="13" y="4" width="1" height="1" fill="#808000"/><rect x="14" y="4" width="1" height="1" fill="#000"/><rect x="0" y="5" width="1" height="1" fill="#000"/><rect x="1" y="5" width="1" height="1" fill="#808000"/><rect x="2" y="5" width="1" height="1" fill="#000"/><rect x="3" y="5" width="5" height="1" fill="#fff"/><rect x="8" y="5" width="1" height="1" fill="#000"/><rect x="9" y="5" width="1" height="1" fill="#fff"/><rect x="10" y="5" width="1" height="1" fill="#000"/><rect x="11" y="5" width="1" height="1" fill="#808000"/><rect x="12" y="5" width="1" height="1" fill="#000"/><rect x="13" y="5" width="1" height="1" fill="#808000"/><rect x="14" y="5" width="1" height="1" fill="#000"/><rect x="0" y="6" width="1" height="1" fill="#000"/><rect x="1" y="6" width="1" height="1" fill="#808000"/><rect x="2" y="6" width="1" height="1" fill="#000"/><rect x="3" y="6" width="1" height="1" fill="#fff"/><rect x="4" y="6" width="3" height="1" fill="#c0c0c0"/><rect x="7" y="6" width="1" height="1" fill="#fff"/><rect x="8" y="6" width="1" height="1" fill="#000"/><rect x="9" y="6" width="1" height="1" fill="#808000"/><rect x="10" y="6" width="1" height="1" fill="#000"/><rect x="11" y="6" width="1" height="1" fill="#808000"/><rect x="12" y="6" width="1" height="1" fill="#000"/><rect x="13" y="6" width="1" height="1" fill="#808000"/><rect x="14" y="6" width="1" height="1" fill="#000"/><rect x="0" y="7" width="1" height="1" fill="#000"/><rect x="1" y="7" width="1" height="1" fill="#808000"/><rect x="2" y="7" width="1" height="1" fill="#000"/><rect x="3" y="7" width="1" height="1" fill="#fff"/><rect x="4" y="7" width="3" height="1" fill="#c0c0c0"/><rect x="7" y="7" width="1" height="1" fill="#fff"/><rect x="8" y="7" width="1" height="1" fill="#000"/><rect x="9" y="7" width="1" height="1" fill="#808000"/><rect x="10" y="7" width="1" height="1" fill="#000"/><rect x="11" y="7" width="1" height="1" fill="#808000"/><rect x="12" y="7" width="1" height="1" fill="#000"/><rect x="13" y="7" width="1" height="1" fill="#808000"/><rect x="14" y="7" width="1" height="1" fill="#000"/><rect x="0" y="8" width="1" height="1" fill="#000"/><rect x="1" y="8" width="1" height="1" fill="#808000"/><rect x="2" y="8" width="1" height="1" fill="#000"/><rect x="3" y="8" width="5" height="1" fill="#fff"/><rect x="8" y="8" width="1" height="1" fill="#000"/><rect x="9" y="8" width="1" height="1" fill="#808000"/><rect x="10" y="8" width="1" height="1" fill="#000"/><rect x="11" y="8" width="1" height="1" fill="#808000"/><rect x="12" y="8" width="1" height="1" fill="#000"/><rect x="13" y="8" width="1" height="1" fill="#808000"/><rect x="14" y="8" width="1" height="1" fill="#000"/><rect x="0" y="9" width="1" height="1" fill="#000"/><rect x="1" y="9" width="2" height="1" fill="#808000"/><rect x="3" y="9" width="5" height="1" fill="#000"/><rect x="8" y="9" width="2" height="1" fill="#808000"/><rect x="10" y="9" width="1" height="1" fill="#000"/><rect x="11" y="9" width="1" height="1" fill="#808000"/><rect x="12" y="9" width="1" height="1" fill="#000"/><rect x="13" y="9" width="1" height="1" fill="#808000"/><rect x="14" y="9" width="1" height="1" fill="#000"/><rect x="0" y="10" width="1" height="1" fill="#000"/><rect x="1" y="10" width="9" height="1" fill="#808000"/><rect x="10" y="10" width="1" height="1" fill="#000"/><rect x="11" y="10" width="1" height="1" fill="#808000"/><rect x="12" y="10" width="3" height="1" fill="#000"/><rect x="0" y="11" width="1" height="1" fill="#000"/><rect x="1" y="11" width="2" height="1" fill="#808000"/><rect x="3" y="11" width="5" height="1" fill="#000"/><rect x="8" y="11" width="2" height="1" fill="#808000"/><rect x="10" y="11" width="1" height="1" fill="#000"/><rect x="11" y="11" width="1" height="1" fill="#808000"/><rect x="12" y="11" width="1" height="1" fill="#000"/><rect x="0" y="12" width="1" height="1" fill="#000"/><rect x="1" y="12" width="2" height="1" fill="#808000"/><rect x="3" y="12" width="3" height="1" fill="#000"/><rect x="6" y="12" width="2" height="1" fill="#fff"/><rect x="8" y="12" width="1" height="1" fill="#000"/><rect x="9" y="12" width="1" height="1" fill="#808000"/><rect x="10" y="12" width="3" height="1" fill="#000"/><rect x="0" y="13" width="1" height="1" fill="#000"/><rect x="1" y="13" width="2" height="1" fill="#808000"/><rect x="3" y="13" width="3" height="1" fill="#000"/><rect x="6" y="13" width="2" height="1" fill="#fff"/><rect x="8" y="13" width="1" height="1" fill="#000"/><rect x="9" y="13" width="1" height="1" fill="#808000"/><rect x="10" y="13" width="1" height="1" fill="#000"/><rect x="0" y="14" width="11" height="1" fill="#000"/></svg>
<svg style="left:58px;top:218px" width="14" height="14" viewBox="0 0 14 14"><rect x="0" y="0" width="14" height="1" fill="#000"/><rect x="0" y="1" width="1" height="1" fill="#000"/><rect x="1" y="1" width="1" height="1" fill="#808000"/><rect x="2" y="1" width="1" height="1" fill="#000"/><rect x="3" y="1" width="8" height="1" fill="#fff"/><rect x="11" y="1" width="1" height="1" fill="#000"/><rect x="12" y="1" width="1" height="1" fill="#fff"/><rect x="13" y="1" width="1" height="1" fill="#000"/><rect x="0" y="2" width="1" height="1" fill="#000"/><rect x="1" y="2" width="1" height="1" fill="#808000"/><rect x="2" y="2" width="1" height="1" fill="#000"/><rect x="3" y="2" width="1" height="1" fill="#fff"/><rect x="4" y="2" width="6" height="1" fill="#c0c0c0"/><rect x="10" y="2" width="1" height="1" fill="#fff"/><rect x="11" y="2" width="1" height="1" fill="#000"/><rect x="12" y="2" width="1" height="1" fill="#808000"/><rect x="13" y="2" width="1" height="1" fill="#000"/><rect x="0" y="3" width="1" height="1" fill="#000"/><rect x="1" y="3" width="1" height="1" fill="#808000"/><rect x="2" y="3" width="1" height="1" fill="#000"/><rect x="3" y="3" width="1" height="1" fill="#fff"/><rect x="4" y="3" width="6" height="1" fill="#c0c0c0"/><rect x="10" y="3" width="1" height="1" fill="#fff"/><rect x="11" y="3" width="1" height="1" fill="#000"/><rect x="12" y="3" width="1" height="1" fill="#808000"/><rect x="13" y="3" width="1" height="1" fill="#000"/><rect x="0" y="4" width="1" height="1" fill="#000"/><rect x="1" y="4" width="1" height="1" fill="#808000"/><rect x="2" y="4" width="1" height="1" fill="#000"/><rect x="3" y="4" width="1" height="1" fill="#fff"/><rect x="4" y="4" width="6" height="1" fill="#c0c0c0"/><rect x="10" y="4" width="1" height="1" fill="#fff"/><rect x="11" y="4" width="1" height="1" fill="#000"/><rect x="12" y="4" width="1" height="1" fill="#808000"/><rect x="13" y="4" width="1" height="1" fill="#000"/><rect x="0" y="5" width="1" height="1" fill="#000"/><rect x="1" y="5" width="1" height="1" fill="#808000"/><rect x="2" y="5" width="1" height="1" fill="#000"/><rect x="3" y="5" width="1" height="1" fill="#fff"/><rect x="4" y="5" width="6" height="1" fill="#c0c0c0"/><rect x="10" y="5" width="1" height="1" fill="#fff"/><rect x="11" y="5" width="1" height="1" fill="#000"/><rect x="12" y="5" width="1" height="1" fill="#808000"/><rect x="13" y="5" width="1" height="1" fill="#000"/><rect x="0" y="6" width="1" height="1" fill="#000"/><rect x="1" y="6" width="1" height="1" fill="#808000"/><rect x="2" y="6" width="1" height="1" fill="#000"/><rect x="3" y="6" width="8" height="1" fill="#fff"/><rect x="11" y="6" width="1" height="1" fill="#000"/><rect x="12" y="6" width="1" height="1" fill="#808000"/><rect x="13" y="6" width="1" height="1" fill="#000"/><rect x="0" y="7" width="1" height="1" fill="#000"/><rect x="1" y="7" width="2" height="1" fill="#808000"/><rect x="3" y="7" width="8" height="1" fill="#000"/><rect x="11" y="7" width="2" height="1" fill="#808000"/><rect x="13" y="7" width="1" height="1" fill="#000"/><rect x="0" y="8" width="1" height="1" fill="#000"/><rect x="1" y="8" width="12" height="1" fill="#808000"/><rect x="13" y="8" width="1" height="1" fill="#000"/><rect x="0" y="9" width="1" height="1" fill="#000"/><rect x="1" y="9" width="2" height="1" fill="#808000"/><rect x="3" y="9" width="8" height="1" fill="#000"/><rect x="11" y="9" width="2" height="1" fill="#808000"/><rect x="13" y="9" width="1" height="1" fill="#000"/><rect x="0" y="10" width="1" height="1" fill="#000"/><rect x="1" y="10" width="2" height="1" fill="#808000"/><rect x="3" y="10" width="5" height="1" fill="#000"/><rect x="8" y="10" width="2" height="1" fill="#fff"/><rect x="10" y="10" width="1" height="1" fill="#000"/><rect x="11" y="10" width="2" height="1" fill="#808000"/><rect x="13" y="10" width="1" height="1" fill="#000"/><rect x="0" y="11" width="1" height="1" fill="#000"/><rect x="1" y="11" width="2" height="1" fill="#808000"/><rect x="3" y="11" width="5" height="1" fill="#000"/><rect x="8" y="11" width="2" height="1" fill="#fff"/><rect x="10" y="11" width="1" height="1" fill="#000"/><rect x="11" y="11" width="2" height="1" fill="#808000"/><rect x="13" y="11" width="1" height="1" fill="#000"/><rect x="0" y="12" width="1" height="1" fill="#000"/><rect x="1" y="12" width="2" height="1" fill="#808000"/><rect x="3" y="12" width="5" height="1" fill="#000"/><rect x="8" y="12" width="2" height="1" fill="#fff"/><rect x="10" y="12" width="1" height="1" fill="#000"/><rect x="11" y="12" width="2" height="1" fill="#808000"/><rect x="13" y="12" width="1" height="1" fill="#000"/><rect x="0" y="13" width="14" height="1" fill="#000"/></svg>
<svg style="left:82px;top:218px" width="15" height="14" viewBox="0 0 15 14"><rect x="0" y="0" width="14" height="1" fill="#000"/><rect x="0" y="1" width="1" height="1" fill="#000"/><rect x="1" y="1" width="1" height="1" fill="#808000"/><rect x="2" y="1" width="1" height="1" fill="#000"/><rect x="3" y="1" width="8" height="1" fill="#fff"/><rect x="11" y="1" width="1" height="1" fill="#000"/><rect x="12" y="1" width="1" height="1" fill="#fff"/><rect x="13" y="1" width="1" height="1" fill="#000"/><rect x="0" y="2" width="1" height="1" fill="#000"/><rect x="1" y="2" width="1" height="1" fill="#808000"/><rect x="2" y="2" width="1" height="1" fill="#000"/><rect x="3" y="2" width="1" height="1" fill="#fff"/><rect x="4" y="2" width="6" height="1" fill="#c0c0c0"/><rect x="10" y="2" width="1" height="1" fill="#fff"/><rect x="11" y="2" width="1" height="1" fill="#000"/><rect x="12" y="2" width="1" height="1" fill="#808000"/><rect x="13" y="2" width="1" height="1" fill="#000"/><rect x="0" y="3" width="1" height="1" fill="#000"/><rect x="1" y="3" width="1" height="1" fill="#808000"/><rect x="2" y="3" width="1" height="1" fill="#000"/><rect x="3" y="3" width="1" height="1" fill="#fff"/><rect x="4" y="3" width="6" height="1" fill="#c0c0c0"/><rect x="10" y="3" width="1" height="1" fill="#fff"/><rect x="11" y="3" width="1" height="1" fill="#000"/><rect x="12" y="3" width="1" height="1" fill="#808000"/><rect x="13" y="3" width="1" height="1" fill="#000"/><rect x="0" y="4" width="1" height="1" fill="#000"/><rect x="1" y="4" width="1" height="1" fill="#808000"/><rect x="2" y="4" width="1" height="1" fill="#000"/><rect x="3" y="4" width="1" height="1" fill="#fff"/><rect x="4" y="4" width="6" height="1" fill="#c0c0c0"/><rect x="10" y="4" width="1" height="1" fill="#fff"/><rect x="11" y="4" width="1" height="1" fill="#000"/><rect x="12" y="4" width="1" height="1" fill="#808000"/><rect x="13" y="4" width="1" height="1" fill="#000"/><rect x="0" y="5" width="1" height="1" fill="#000"/><rect x="1" y="5" width="1" height="1" fill="#808000"/><rect x="2" y="5" width="1" height="1" fill="#000"/><rect x="3" y="5" width="1" height="1" fill="#fff"/><rect x="4" y="5" width="1" height="1" fill="#c0c0c0"/><rect x="5" y="5" width="5" height="1" fill="#000"/><rect x="10" y="5" width="1" height="1" fill="#fff"/><rect x="11" y="5" width="1" height="1" fill="#000"/><rect x="12" y="5" width="1" height="1" fill="#808000"/><rect x="13" y="5" width="1" height="1" fill="#000"/><rect x="0" y="6" width="1" height="1" fill="#000"/><rect x="1" y="6" width="1" height="1" fill="#808000"/><rect x="2" y="6" width="1" height="1" fill="#000"/><rect x="3" y="6" width="1" height="1" fill="#fff"/><rect x="4" y="6" width="1" height="1" fill="#000"/><rect x="5" y="6" width="5" height="1" fill="#ff0"/><rect x="10" y="6" width="5" height="1" fill="#000"/><rect x="0" y="7" width="1" height="1" fill="#000"/><rect x="1" y="7" width="2" height="1" fill="#808000"/><rect x="3" y="7" width="2" height="1" fill="#000"/><rect x="5" y="7" width="9" height="1" fill="#fff"/><rect x="14" y="7" width="1" height="1" fill="#000"/><rect x="0" y="8" width="1" height="1" fill="#000"/><rect x="1" y="8" width="3" height="1" fill="#808000"/><rect x="4" y="8" width="1" height="1" fill="#000"/><rect x="5" y="8" width="9" height="1" fill="#ff0"/><rect x="14" y="8" width="1" height="1" fill="#000"/><rect x="0" y="9" width="1" height="1" fill="#000"/><rect x="1" y="9" width="2" height="1" fill="#808000"/><rect x="3" y="9" width="2" height="1" fill="#000"/><rect x="5" y="9" width="9" height="1" fill="#ff0"/><rect x="14" y="9" width="1" height="1" fill="#000"/><rect x="0" y="10" width="1" height="1" fill="#000"/><rect x="1" y="10" width="2" height="1" fill="#808000"/><rect x="3" y="10" width="2" height="1" fill="#000"/><rect x="5" y="10" width="9" height="1" fill="#ff0"/><rect x="14" y="10" width="1" height="1" fill="#000"/><rect x="0" y="11" width="1" height="1" fill="#000"/><rect x="1" y="11" width="2" height="1" fill="#808000"/><rect x="3" y="11" width="2" height="1" fill="#000"/><rect x="5" y="11" width="9" height="1" fill="#ff0"/><rect x="14" y="11" width="1" height="1" fill="#000"/><rect x="0" y="12" width="1" height="1" fill="#000"/><rect x="1" y="12" width="2" height="1" fill="#808000"/><rect x="3" y="12" width="2" height="1" fill="#000"/><rect x="5" y="12" width="9" height="1" fill="#ff0"/><rect x="14" y="12" width="1" height="1" fill="#000"/><rect x="0" y="13" width="15" height="1" fill="#000"/></svg>
<svg style="left:105px;top:218px" width="16" height="13" viewBox="0 0 16 13"><rect x="9" y="0" width="3" height="1" fill="#000"/><rect x="8" y="1" width="1" height="1" fill="#000"/><rect x="12" y="1" width="1" height="1" fill="#000"/><rect x="14" y="1" width="1" height="1" fill="#000"/><rect x="12" y="2" width="2" height="1" fill="#000"/><rect x="0" y="3" width="4" height="1" fill="#000"/><rect x="11" y="3" width="3" height="1" fill="#000"/><rect x="0" y="4" width="1" height="1" fill="#000"/><rect x="1" y="4" width="1" height="1" fill="#ff0"/><rect x="2" y="4" width="1" height="1" fill="#fff"/><rect x="3" y="4" width="1" height="1" fill="#ff0"/><rect x="4" y="4" width="8" height="1" fill="#000"/><rect x="0" y="5" width="1" height="1" fill="#000"/><rect x="1" y="5" width="1" height="1" fill="#fff"/><rect x="2" y="5" width="1" height="1" fill="#ff0"/><rect x="3" y="5" width="1" height="1" fill="#fff"/><rect x="4" y="5" width="1" height="1" fill="#ff0"/><rect x="5" y="5" width="1" height="1" fill="#fff"/><rect x="6" y="5" width="1" height="1" fill="#ff0"/><rect x="7" y="5" width="1" height="1" fill="#fff"/><rect x="8" y="5" width="1" height="1" fill="#ff0"/><rect x="9" y="5" width="1" height="1" fill="#fff"/><rect x="10" y="5" width="1" height="1" fill="#ff0"/><rect x="11" y="5" width="1" height="1" fill="#000"/><rect x="0" y="6" width="1" height="1" fill="#000"/><rect x="1" y="6" width="1" height="1" fill="#ff0"/><rect x="2" y="6" width="1" height="1" fill="#fff"/><rect x="3" y="6" width="1" height="1" fill="#ff0"/><rect x="4" y="6" width="1" height="1" fill="#fff"/><rect x="5" y="6" width="1" height="1" fill="#ff0"/><rect x="6" y="6" width="1" height="1" fill="#fff"/><rect x="7" y="6" width="1" height="1" fill="#ff0"/><rect x="8" y="6" width="1" height="1" fill="#fff"/><rect x="9" y="6" width="1" height="1" fill="#ff0"/><rect x="10" y="6" width="1" height="1" fill="#fff"/><rect x="11" y="6" width="1" height="1" fill="#000"/><rect x="0" y="7" width="1" height="1" fill="#000"/><rect x="1" y="7" width="1" height="1" fill="#fff"/><rect x="2" y="7" width="1" height="1" fill="#ff0"/><rect x="3" y="7" width="1" height="1" fill="#fff"/><rect x="4" y="7" width="12" height="1" fill="#000"/><rect x="0" y="8" width="1" height="1" fill="#000"/><rect x="1" y="8" width="1" height="1" fill="#ff0"/><rect x="2" y="8" width="1" height="1" fill="#fff"/><rect x="3" y="8" width="1" height="1" fill="#000"/><rect x="4" y="8" width="10" height="1" fill="#808000"/><rect x="14" y="8" width="1" height="1" fill="#000"/><rect x="0" y="9" width="1" height="1" fill="#000"/><rect x="1" y="9" width="1" height="1" fill="#fff"/><rect x="2" y="9" width="1" height="1" fill="#000"/><rect x="3" y="9" width="10" height="1" fill="#808000"/><rect x="13" y="9" width="1" height="1" fill="#000"/><rect x="0" y="10" width="1" height="1" fill="#000"/><rect x="1" y="10" width="1" height="1" fill="#ff0"/><rect x="2" y="10" width="1" height="1" fill="#000"/><rect x="3" y="10" width="9" height="1" fill="#808000"/><rect x="12" y="10" width="1" height="1" fill="#000"/><rect x="0" y="11" width="2" height="1" fill="#000"/><rect x="2" y="11" width="9" height="1" fill="#808000"/><rect x="11" y="11" width="1" height="1" fill="#000"/><rect x="0" y="12" width="11" height="1" fill="#000"/></svg>
<div class="a" style="left:128px;top:216px;width:1px;height:18px;background:#808080"></div><div class="a" style="left:129px;top:216px;width:1px;height:18px;background:#fff"></div>
<svg style="left:139px;top:219px" width="13" height="12" viewBox="0 0 13 12"><rect x="3" y="0" width="2" height="1" fill="#000"/><rect x="9" y="0" width="2" height="1" fill="#000"/><rect x="2" y="1" width="4" height="1" fill="#000"/><rect x="8" y="1" width="4" height="1" fill="#000"/><rect x="2" y="2" width="4" height="1" fill="#000"/><rect x="8" y="2" width="4" height="1" fill="#000"/><rect x="1" y="3" width="2" height="1" fill="#000"/><rect x="3" y="3" width="1" height="1" fill="#fff"/><rect x="4" y="3" width="3" height="1" fill="#000"/><rect x="7" y="3" width="1" height="1" fill="#fff"/><rect x="8" y="3" width="4" height="1" fill="#000"/><rect x="1" y="4" width="12" height="1" fill="#000"/><rect x="0" y="5" width="2" height="1" fill="#000"/><rect x="2" y="5" width="1" height="1" fill="#fff"/><rect x="3" y="5" width="4" height="1" fill="#000"/><rect x="7" y="5" width="1" height="1" fill="#fff"/><rect x="8" y="5" width="5" height="1" fill="#000"/><rect x="0" y="6" width="2" height="1" fill="#000"/><rect x="2" y="6" width="1" height="1" fill="#fff"/><rect x="3" y="6" width="2" height="1" fill="#000"/><rect x="5" y="6" width="1" height="1" fill="#808080"/><rect x="6" y="6" width="1" height="1" fill="#000"/><rect x="7" y="6" width="1" height="1" fill="#fff"/><rect x="8" y="6" width="5" height="1" fill="#000"/><rect x="0" y="7" width="2" height="1" fill="#000"/><rect x="2" y="7" width="1" height="1" fill="#fff"/><rect x="3" y="7" width="2" height="1" fill="#000"/><rect x="5" y="7" width="1" height="1" fill="#808080"/><rect x="6" y="7" width="1" height="1" fill="#000"/><rect x="7" y="7" width="1" height="1" fill="#fff"/><rect x="8" y="7" width="5" height="1" fill="#000"/><rect x="0" y="8" width="5" height="1" fill="#000"/><rect x="7" y="8" width="6" height="1" fill="#000"/><rect x="0" y="9" width="1" height="1" fill="#000"/><rect x="1" y="9" width="1" height="1" fill="#fff"/><rect x="2" y="9" width="3" height="1" fill="#000"/><rect x="8" y="9" width="1" height="1" fill="#000"/><rect x="9" y="9" width="1" height="1" fill="#fff"/><rect x="10" y="9" width="3" height="1" fill="#000"/><rect x="0" y="10" width="1" height="1" fill="#000"/><rect x="1" y="10" width="1" height="1" fill="#fff"/><rect x="2" y="10" width="3" height="1" fill="#000"/><rect x="8" y="10" width="1" height="1" fill="#000"/><rect x="9" y="10" width="1" height="1" fill="#fff"/><rect x="10" y="10" width="3" height="1" fill="#000"/><rect x="0" y="11" width="5" height="1" fill="#000"/><rect x="8" y="11" width="5" height="1" fill="#000"/></svg>
<svg style="left:163px;top:218px" width="13" height="14" viewBox="0 0 13 14"><rect x="3" y="0" width="2" height="1" fill="#000"/><rect x="9" y="0" width="2" height="1" fill="#000"/><rect x="2" y="1" width="4" height="1" fill="#000"/><rect x="8" y="1" width="4" height="1" fill="#000"/><rect x="2" y="2" width="4" height="1" fill="#000"/><rect x="8" y="2" width="4" height="1" fill="#000"/><rect x="1" y="3" width="2" height="1" fill="#000"/><rect x="3" y="3" width="1" height="1" fill="#fff"/><rect x="4" y="3" width="3" height="1" fill="#000"/><rect x="7" y="3" width="1" height="1" fill="#fff"/><rect x="8" y="3" width="4" height="1" fill="#000"/><rect x="1" y="4" width="12" height="1" fill="#000"/><rect x="0" y="5" width="2" height="1" fill="#000"/><rect x="2" y="5" width="1" height="1" fill="#fff"/><rect x="3" y="5" width="4" height="1" fill="#000"/><rect x="7" y="5" width="1" height="1" fill="#fff"/><rect x="8" y="5" width="5" height="1" fill="#000"/><rect x="0" y="6" width="2" height="1" fill="#000"/><rect x="2" y="6" width="1" height="1" fill="#fff"/><rect x="3" y="6" width="2" height="1" fill="#000"/><rect x="5" y="6" width="1" height="1" fill="#808080"/><rect x="6" y="6" width="1" height="1" fill="#000"/><rect x="7" y="6" width="1" height="1" fill="#fff"/><rect x="8" y="6" width="5" height="1" fill="#000"/><rect x="0" y="7" width="2" height="1" fill="#000"/><rect x="2" y="7" width="1" height="1" fill="#fff"/><rect x="3" y="7" width="2" height="1" fill="#000"/><rect x="5" y="7" width="1" height="1" fill="#808080"/><rect x="6" y="7" width="1" height="1" fill="#000"/><rect x="7" y="7" width="1" height="1" fill="#fff"/><rect x="8" y="7" width="5" height="1" fill="#000"/><rect x="0" y="8" width="5" height="1" fill="#000"/><rect x="7" y="8" width="6" height="1" fill="#000"/><rect x="0" y="9" width="1" height="1" fill="#000"/><rect x="1" y="9" width="1" height="1" fill="#fff"/><rect x="2" y="9" width="3" height="1" fill="#000"/><rect x="8" y="9" width="1" height="1" fill="#000"/><rect x="9" y="9" width="1" height="1" fill="#fff"/><rect x="10" y="9" width="3" height="1" fill="#000"/><rect x="0" y="10" width="1" height="1" fill="#000"/><rect x="1" y="10" width="1" height="1" fill="#fff"/><rect x="2" y="10" width="3" height="1" fill="#000"/><rect x="8" y="10" width="1" height="1" fill="#000"/><rect x="9" y="10" width="1" height="1" fill="#fff"/><rect x="10" y="10" width="3" height="1" fill="#000"/><rect x="0" y="11" width="5" height="1" fill="#000"/><rect x="8" y="11" width="5" height="1" fill="#000"/><rect x="0" y="13" width="1" height="1" fill="#000"/><rect x="2" y="13" width="1" height="1" fill="#000"/><rect x="4" y="13" width="1" height="1" fill="#000"/><rect x="8" y="13" width="1" height="1" fill="#000"/><rect x="10" y="13" width="1" height="1" fill="#000"/><rect x="12" y="13" width="1" height="1" fill="#000"/></svg>
<div class="a" style="left:185px;top:216px;width:1px;height:18px;background:#808080"></div><div class="a" style="left:186px;top:216px;width:1px;height:18px;background:#fff"></div>
<svg style="left:197px;top:217px" width="10" height="14" viewBox="0 0 10 14"><rect x="1" y="0" width="1" height="1" fill="#000"/><rect x="8" y="0" width="1" height="1" fill="#000"/><rect x="1" y="1" width="1" height="1" fill="#000"/><rect x="8" y="1" width="1" height="1" fill="#000"/><rect x="1" y="2" width="1" height="1" fill="#000"/><rect x="8" y="2" width="1" height="1" fill="#000"/><rect x="2" y="3" width="1" height="1" fill="#000"/><rect x="7" y="3" width="1" height="1" fill="#000"/><rect x="2" y="4" width="1" height="1" fill="#000"/><rect x="7" y="4" width="1" height="1" fill="#000"/><rect x="3" y="5" width="1" height="1" fill="#000"/><rect x="6" y="5" width="1" height="1" fill="#000"/><rect x="3" y="6" width="1" height="1" fill="#000"/><rect x="6" y="6" width="1" height="1" fill="#000"/><rect x="4" y="7" width="2" height="1" fill="#000"/><rect x="3" y="8" width="1" height="1" fill="#000"/><rect x="6" y="8" width="1" height="1" fill="#000"/><rect x="1" y="9" width="3" height="1" fill="#000"/><rect x="6" y="9" width="3" height="1" fill="#000"/><rect x="0" y="10" width="1" height="1" fill="#000"/><rect x="3" y="10" width="1" height="1" fill="#000"/><rect x="6" y="10" width="1" height="1" fill="#000"/><rect x="9" y="10" width="1" height="1" fill="#000"/><rect x="0" y="11" width="1" height="1" fill="#000"/><rect x="3" y="11" width="1" height="1" fill="#000"/><rect x="6" y="11" width="1" height="1" fill="#000"/><rect x="9" y="11" width="1" height="1" fill="#000"/><rect x="0" y="12" width="1" height="1" fill="#000"/><rect x="3" y="12" width="1" height="1" fill="#000"/><rect x="6" y="12" width="1" height="1" fill="#000"/><rect x="9" y="12" width="1" height="1" fill="#000"/><rect x="1" y="13" width="2" height="1" fill="#000"/><rect x="7" y="13" width="2" height="1" fill="#000"/></svg>
<svg style="left:218px;top:217px" width="15" height="13" viewBox="0 0 15 13"><rect x="0" y="0" width="6" height="1" fill="#000"/><rect x="0" y="1" width="1" height="1" fill="#000"/><rect x="1" y="1" width="4" height="1" fill="#fff"/><rect x="5" y="1" width="2" height="1" fill="#000"/><rect x="0" y="2" width="1" height="1" fill="#000"/><rect x="1" y="2" width="4" height="1" fill="#fff"/><rect x="5" y="2" width="1" height="1" fill="#000"/><rect x="6" y="2" width="1" height="1" fill="#fff"/><rect x="7" y="2" width="1" height="1" fill="#000"/><rect x="0" y="3" width="1" height="1" fill="#000"/><rect x="1" y="3" width="1" height="1" fill="#fff"/><rect x="2" y="3" width="2" height="1" fill="#000"/><rect x="4" y="3" width="1" height="1" fill="#fff"/><rect x="5" y="3" width="8" height="1" fill="#000"/><rect x="0" y="4" width="1" height="1" fill="#000"/><rect x="1" y="4" width="5" height="1" fill="#fff"/><rect x="6" y="4" width="1" height="1" fill="#000"/><rect x="7" y="4" width="5" height="1" fill="#fff"/><rect x="12" y="4" width="2" height="1" fill="#000"/><rect x="0" y="5" width="1" height="1" fill="#000"/><rect x="1" y="5" width="1" height="1" fill="#fff"/><rect x="2" y="5" width="5" height="1" fill="#000"/><rect x="7" y="5" width="5" height="1" fill="#fff"/><rect x="12" y="5" width="1" height="1" fill="#000"/><rect x="13" y="5" width="1" height="1" fill="#fff"/><rect x="14" y="5" width="1" height="1" fill="#000"/><rect x="0" y="6" width="1" height="1" fill="#000"/><rect x="1" y="6" width="5" height="1" fill="#fff"/><rect x="6" y="6" width="1" height="1" fill="#000"/><rect x="7" y="6" width="1" height="1" fill="#fff"/><rect x="8" y="6" width="3" height="1" fill="#000"/><rect x="11" y="6" width="1" height="1" fill="#fff"/><rect x="12" y="6" width="3" height="1" fill="#000"/><rect x="0" y="7" width="1" height="1" fill="#000"/><rect x="1" y="7" width="1" height="1" fill="#fff"/><rect x="2" y="7" width="5" height="1" fill="#000"/><rect x="7" y="7" width="7" height="1" fill="#fff"/><rect x="14" y="7" width="1" height="1" fill="#000"/><rect x="0" y="8" width="1" height="1" fill="#000"/><rect x="1" y="8" width="5" height="1" fill="#fff"/><rect x="6" y="8" width="1" height="1" fill="#000"/><rect x="7" y="8" width="1" height="1" fill="#fff"/><rect x="8" y="8" width="5" height="1" fill="#000"/><rect x="13" y="8" width="1" height="1" fill="#fff"/><rect x="14" y="8" width="1" height="1" fill="#000"/><rect x="0" y="9" width="7" height="1" fill="#000"/><rect x="7" y="9" width="7" height="1" fill="#fff"/><rect x="14" y="9" width="1" height="1" fill="#000"/><rect x="6" y="10" width="1" height="1" fill="#000"/><rect x="7" y="10" width="1" height="1" fill="#fff"/><rect x="8" y="10" width="5" height="1" fill="#000"/><rect x="13" y="10" width="1" height="1" fill="#fff"/><rect x="14" y="10" width="1" height="1" fill="#000"/><rect x="6" y="11" width="1" height="1" fill="#000"/><rect x="7" y="11" width="7" height="1" fill="#fff"/><rect x="14" y="11" width="1" height="1" fill="#000"/><rect x="6" y="12" width="9" height="1" fill="#000"/></svg>
<svg style="left:242px;top:218px" width="15" height="13" viewBox="0 0 15 13"><rect x="5" y="0" width="3" height="1" fill="#000"/><rect x="1" y="1" width="4" height="1" fill="#000"/><rect x="5" y="1" width="1" height="1" fill="#fff"/><rect x="6" y="1" width="1" height="1" fill="#000"/><rect x="7" y="1" width="1" height="1" fill="#fff"/><rect x="8" y="1" width="4" height="1" fill="#000"/><rect x="0" y="2" width="1" height="1" fill="#000"/><rect x="1" y="2" width="2" height="1" fill="#c0c0c0"/><rect x="3" y="2" width="1" height="1" fill="#000"/><rect x="4" y="2" width="5" height="1" fill="#fff"/><rect x="9" y="2" width="1" height="1" fill="#000"/><rect x="10" y="2" width="2" height="1" fill="#c0c0c0"/><rect x="12" y="2" width="1" height="1" fill="#000"/><rect x="0" y="3" width="1" height="1" fill="#000"/><rect x="1" y="3" width="2" height="1" fill="#c0c0c0"/><rect x="3" y="3" width="7" height="1" fill="#000"/><rect x="10" y="3" width="2" height="1" fill="#c0c0c0"/><rect x="12" y="3" width="1" height="1" fill="#000"/><rect x="0" y="4" width="1" height="1" fill="#000"/><rect x="1" y="4" width="11" height="1" fill="#c0c0c0"/><rect x="12" y="4" width="1" height="1" fill="#000"/><rect x="0" y="5" width="1" height="1" fill="#000"/><rect x="1" y="5" width="6" height="1" fill="#c0c0c0"/><rect x="7" y="5" width="6" height="1" fill="#000"/><rect x="0" y="6" width="1" height="1" fill="#000"/><rect x="1" y="6" width="6" height="1" fill="#c0c0c0"/><rect x="7" y="6" width="1" height="1" fill="#000"/><rect x="8" y="6" width="4" height="1" fill="#fff"/><rect x="12" y="6" width="2" height="1" fill="#000"/><rect x="0" y="7" width="1" height="1" fill="#000"/><rect x="1" y="7" width="6" height="1" fill="#c0c0c0"/><rect x="7" y="7" width="1" height="1" fill="#000"/><rect x="8" y="7" width="4" height="1" fill="#fff"/><rect x="12" y="7" width="1" height="1" fill="#000"/><rect x="13" y="7" width="1" height="1" fill="#fff"/><rect x="14" y="7" width="1" height="1" fill="#000"/><rect x="0" y="8" width="1" height="1" fill="#000"/><rect x="1" y="8" width="6" height="1" fill="#c0c0c0"/><rect x="7" y="8" width="1" height="1" fill="#000"/><rect x="8" y="8" width="1" height="1" fill="#fff"/><rect x="9" y="8" width="2" height="1" fill="#000"/><rect x="11" y="8" width="1" height="1" fill="#fff"/><rect x="12" y="8" width="3" height="1" fill="#000"/><rect x="0" y="9" width="1" height="1" fill="#000"/><rect x="1" y="9" width="6" height="1" fill="#c0c0c0"/><rect x="7" y="9" width="1" height="1" fill="#000"/><rect x="8" y="9" width="6" height="1" fill="#fff"/><rect x="14" y="9" width="1" height="1" fill="#000"/><rect x="0" y="10" width="1" height="1" fill="#000"/><rect x="1" y="10" width="6" height="1" fill="#c0c0c0"/><rect x="7" y="10" width="1" height="1" fill="#000"/><rect x="8" y="10" width="1" height="1" fill="#fff"/><rect x="9" y="10" width="4" height="1" fill="#000"/><rect x="13" y="10" width="1" height="1" fill="#fff"/><rect x="14" y="10" width="1" height="1" fill="#000"/><rect x="0" y="11" width="8" height="1" fill="#000"/><rect x="8" y="11" width="6" height="1" fill="#fff"/><rect x="14" y="11" width="1" height="1" fill="#000"/><rect x="7" y="12" width="8" height="1" fill="#000"/></svg>
<div class="a" style="left:264px;top:216px;width:1px;height:18px;background:#808080"></div><div class="a" style="left:265px;top:216px;width:1px;height:18px;background:#fff"></div>
<svg style="left:275px;top:220px" width="13" height="8" viewBox="0 0 13 8"><rect x="6" y="0" width="5" height="1" fill="#000080"/><rect x="5" y="1" width="1" height="1" fill="#000080"/><rect x="11" y="1" width="1" height="1" fill="#000080"/><rect x="0" y="2" width="1" height="1" fill="#000080"/><rect x="4" y="2" width="1" height="1" fill="#000080"/><rect x="12" y="2" width="1" height="1" fill="#000080"/><rect x="0" y="3" width="2" height="1" fill="#000080"/><rect x="3" y="3" width="1" height="1" fill="#000080"/><rect x="12" y="3" width="1" height="1" fill="#000080"/><rect x="0" y="4" width="4" height="1" fill="#000080"/><rect x="12" y="4" width="1" height="1" fill="#000080"/><rect x="0" y="5" width="4" height="1" fill="#000080"/><rect x="11" y="5" width="1" height="1" fill="#000080"/><rect x="0" y="6" width="5" height="1" fill="#000080"/><rect x="10" y="6" width="1" height="1" fill="#000080"/><rect x="9" y="7" width="1" height="1" fill="#000080"/></svg>
<div class="a" style="left:296px;top:216px;width:1px;height:18px;background:#808080"></div><div class="a" style="left:297px;top:216px;width:1px;height:18px;background:#fff"></div>
<svg style="left:305px;top:217px" width="16" height="14" viewBox="0 0 16 14"><rect x="4" y="0" width="1" height="1" fill="#000"/><rect x="3" y="1" width="1" height="1" fill="#000"/><rect x="4" y="1" width="1" height="1" fill="#fff"/><rect x="5" y="1" width="1" height="1" fill="#000"/><rect x="2" y="2" width="1" height="1" fill="#000"/><rect x="3" y="2" width="3" height="1" fill="#fff"/><rect x="6" y="2" width="1" height="1" fill="#000"/><rect x="1" y="3" width="1" height="1" fill="#000"/><rect x="2" y="3" width="5" height="1" fill="#fff"/><rect x="7" y="3" width="1" height="1" fill="#000"/><rect x="0" y="4" width="1" height="1" fill="#000"/><rect x="1" y="4" width="7" height="1" fill="#fff"/><rect x="8" y="4" width="1" height="1" fill="#000"/><rect x="0" y="5" width="3" height="1" fill="#000"/><rect x="3" y="5" width="3" height="1" fill="#fff"/><rect x="6" y="5" width="3" height="1" fill="#000"/><rect x="2" y="6" width="1" height="1" fill="#000"/><rect x="3" y="6" width="3" height="1" fill="#fff"/><rect x="6" y="6" width="1" height="1" fill="#000"/><rect x="2" y="7" width="1" height="1" fill="#000"/><rect x="3" y="7" width="3" height="1" fill="#fff"/><rect x="6" y="7" width="1" height="1" fill="#000"/><rect x="2" y="8" width="1" height="1" fill="#000"/><rect x="3" y="8" width="3" height="1" fill="#fff"/><rect x="6" y="8" width="5" height="1" fill="#000"/><rect x="2" y="9" width="1" height="1" fill="#000"/><rect x="3" y="9" width="7" height="1" fill="#fff"/><rect x="10" y="9" width="1" height="1" fill="#000"/><rect x="12" y="9" width="3" height="1" fill="#000"/><rect x="2" y="10" width="1" height="1" fill="#000"/><rect x="3" y="10" width="7" height="1" fill="#fff"/><rect x="10" y="10" width="2" height="1" fill="#000"/><rect x="12" y="10" width="3" height="1" fill="#fff"/><rect x="15" y="10" width="1" height="1" fill="#000"/><rect x="2" y="11" width="1" height="1" fill="#000"/><rect x="3" y="11" width="7" height="1" fill="#fff"/><rect x="10" y="11" width="2" height="1" fill="#000"/><rect x="12" y="11" width="3" height="1" fill="#fff"/><rect x="15" y="11" width="1" height="1" fill="#000"/><rect x="2" y="12" width="1" height="1" fill="#000"/><rect x="3" y="12" width="7" height="1" fill="#fff"/><rect x="10" y="12" width="1" height="1" fill="#000"/><rect x="12" y="12" width="3" height="1" fill="#000"/><rect x="2" y="13" width="9" height="1" fill="#000"/></svg>
<svg style="left:329px;top:219px" width="17" height="11" viewBox="0 0 17 11"><rect x="5" y="0" width="1" height="1" fill="#000"/><rect x="4" y="1" width="2" height="1" fill="#000"/><rect x="3" y="2" width="1" height="1" fill="#000"/><rect x="4" y="2" width="1" height="1" fill="#fff"/><rect x="5" y="2" width="1" height="1" fill="#000"/><rect x="2" y="3" width="1" height="1" fill="#000"/><rect x="3" y="3" width="2" height="1" fill="#fff"/><rect x="5" y="3" width="5" height="1" fill="#000"/><rect x="12" y="3" width="3" height="1" fill="#000"/><rect x="1" y="4" width="1" height="1" fill="#000"/><rect x="2" y="4" width="7" height="1" fill="#fff"/><rect x="9" y="4" width="1" height="1" fill="#000"/><rect x="11" y="4" width="1" height="1" fill="#000"/><rect x="12" y="4" width="3" height="1" fill="#fff"/><rect x="15" y="4" width="1" height="1" fill="#000"/><rect x="0" y="5" width="1" height="1" fill="#000"/><rect x="1" y="5" width="8" height="1" fill="#fff"/><rect x="9" y="5" width="1" height="1" fill="#000"/><rect x="11" y="5" width="1" height="1" fill="#000"/><rect x="12" y="5" width="3" height="1" fill="#fff"/><rect x="15" y="5" width="1" height="1" fill="#000"/><rect x="1" y="6" width="1" height="1" fill="#000"/><rect x="2" y="6" width="7" height="1" fill="#fff"/><rect x="9" y="6" width="1" height="1" fill="#000"/><rect x="11" y="6" width="1" height="1" fill="#000"/><rect x="12" y="6" width="3" height="1" fill="#fff"/><rect x="15" y="6" width="1" height="1" fill="#000"/><rect x="2" y="7" width="1" height="1" fill="#000"/><rect x="3" y="7" width="2" height="1" fill="#fff"/><rect x="5" y="7" width="5" height="1" fill="#000"/><rect x="12" y="7" width="3" height="1" fill="#000"/><rect x="3" y="8" width="1" height="1" fill="#000"/><rect x="4" y="8" width="1" height="1" fill="#fff"/><rect x="5" y="8" width="1" height="1" fill="#000"/><rect x="4" y="9" width="2" height="1" fill="#000"/><rect x="5" y="10" width="1" height="1" fill="#000"/></svg>
<svg style="left:356px;top:220px" width="9" height="9" viewBox="0 0 9 9"><rect x="2" y="0" width="5" height="1" fill="#000"/><rect x="1" y="1" width="1" height="1" fill="#000"/><rect x="2" y="1" width="5" height="1" fill="#fff"/><rect x="7" y="1" width="1" height="1" fill="#000"/><rect x="0" y="2" width="1" height="1" fill="#000"/><rect x="1" y="2" width="7" height="1" fill="#fff"/><rect x="8" y="2" width="1" height="1" fill="#000"/><rect x="0" y="3" width="1" height="1" fill="#000"/><rect x="1" y="3" width="7" height="1" fill="#fff"/><rect x="8" y="3" width="1" height="1" fill="#000"/><rect x="0" y="4" width="1" height="1" fill="#000"/><rect x="1" y="4" width="7" height="1" fill="#fff"/><rect x="8" y="4" width="1" height="1" fill="#000"/><rect x="0" y="5" width="1" height="1" fill="#000"/><rect x="1" y="5" width="7" height="1" fill="#fff"/><rect x="8" y="5" width="1" height="1" fill="#000"/><rect x="0" y="6" width="1" height="1" fill="#000"/><rect x="1" y="6" width="7" height="1" fill="#fff"/><rect x="8" y="6" width="1" height="1" fill="#000"/><rect x="1" y="7" width="1" height="1" fill="#000"/><rect x="2" y="7" width="5" height="1" fill="#fff"/><rect x="7" y="7" width="1" height="1" fill="#000"/><rect x="8" y="7" width="1" height="1" fill="#808080"/><rect x="2" y="8" width="5" height="1" fill="#000"/><rect x="7" y="8" width="1" height="1" fill="#808080"/></svg>
<svg style="left:376px;top:219px" width="17" height="11" viewBox="0 0 17 11"><rect x="11" y="0" width="1" height="1" fill="#000"/><rect x="11" y="1" width="2" height="1" fill="#000"/><rect x="11" y="2" width="1" height="1" fill="#000"/><rect x="12" y="2" width="1" height="1" fill="#fff"/><rect x="13" y="2" width="1" height="1" fill="#000"/><rect x="2" y="3" width="3" height="1" fill="#000"/><rect x="7" y="3" width="5" height="1" fill="#000"/><rect x="12" y="3" width="2" height="1" fill="#fff"/><rect x="14" y="3" width="1" height="1" fill="#000"/><rect x="1" y="4" width="1" height="1" fill="#000"/><rect x="2" y="4" width="3" height="1" fill="#fff"/><rect x="5" y="4" width="1" height="1" fill="#000"/><rect x="7" y="4" width="1" height="1" fill="#000"/><rect x="8" y="4" width="7" height="1" fill="#fff"/><rect x="15" y="4" width="1" height="1" fill="#000"/><rect x="1" y="5" width="1" height="1" fill="#000"/><rect x="2" y="5" width="3" height="1" fill="#fff"/><rect x="5" y="5" width="1" height="1" fill="#000"/><rect x="7" y="5" width="1" height="1" fill="#000"/><rect x="8" y="5" width="8" height="1" fill="#fff"/><rect x="16" y="5" width="1" height="1" fill="#000"/><rect x="1" y="6" width="1" height="1" fill="#000"/><rect x="2" y="6" width="3" height="1" fill="#fff"/><rect x="5" y="6" width="1" height="1" fill="#000"/><rect x="7" y="6" width="1" height="1" fill="#000"/><rect x="8" y="6" width="7" height="1" fill="#fff"/><rect x="15" y="6" width="1" height="1" fill="#000"/><rect x="2" y="7" width="3" height="1" fill="#000"/><rect x="7" y="7" width="5" height="1" fill="#000"/><rect x="12" y="7" width="2" height="1" fill="#fff"/><rect x="14" y="7" width="1" height="1" fill="#000"/><rect x="11" y="8" width="1" height="1" fill="#000"/><rect x="12" y="8" width="1" height="1" fill="#fff"/><rect x="13" y="8" width="1" height="1" fill="#000"/><rect x="11" y="9" width="2" height="1" fill="#000"/><rect x="11" y="10" width="1" height="1" fill="#000"/></svg>
<div class="a" style="left:401px;top:216px;width:1px;height:18px;background:#808080"></div><div class="a" style="left:402px;top:216px;width:1px;height:18px;background:#fff"></div>
<svg style="left:409px;top:218px" width="16" height="13" viewBox="0 0 16 13"><rect x="7" y="0" width="6" height="1" fill="#000"/><rect x="14" y="0" width="2" height="1" fill="#000080"/><rect x="6" y="1" width="1" height="1" fill="#000"/><rect x="7" y="1" width="1" height="1" fill="#fff"/><rect x="8" y="1" width="1" height="1" fill="#000"/><rect x="9" y="1" width="5" height="1" fill="#c0c0c0"/><rect x="14" y="1" width="1" height="1" fill="#000"/><rect x="15" y="1" width="1" height="1" fill="#000080"/><rect x="5" y="2" width="1" height="1" fill="#000"/><rect x="6" y="2" width="1" height="1" fill="#fff"/><rect x="7" y="2" width="1" height="1" fill="#000"/><rect x="8" y="2" width="1" height="1" fill="#fff"/><rect x="9" y="2" width="5" height="1" fill="#c0c0c0"/><rect x="14" y="2" width="1" height="1" fill="#000"/><rect x="15" y="2" width="1" height="1" fill="#000080"/><rect x="0" y="3" width="4" height="1" fill="#000080"/><rect x="4" y="3" width="1" height="1" fill="#000"/><rect x="5" y="3" width="1" height="1" fill="#fff"/><rect x="6" y="3" width="1" height="1" fill="#000"/><rect x="7" y="3" width="1" height="1" fill="#fff"/><rect x="8" y="3" width="1" height="1" fill="#000"/><rect x="9" y="3" width="1" height="1" fill="#fff"/><rect x="10" y="3" width="4" height="1" fill="#c0c0c0"/><rect x="14" y="3" width="1" height="1" fill="#000"/><rect x="15" y="3" width="1" height="1" fill="#000080"/><rect x="0" y="4" width="3" height="1" fill="#000080"/><rect x="3" y="4" width="1" height="1" fill="#000"/><rect x="4" y="4" width="1" height="1" fill="#fff"/><rect x="5" y="4" width="1" height="1" fill="#000"/><rect x="6" y="4" width="1" height="1" fill="#fff"/><rect x="7" y="4" width="1" height="1" fill="#000"/><rect x="8" y="4" width="1" height="1" fill="#fff"/><rect x="9" y="4" width="1" height="1" fill="#000"/><rect x="10" y="4" width="3" height="1" fill="#c0c0c0"/><rect x="13" y="4" width="1" height="1" fill="#000"/><rect x="14" y="4" width="2" height="1" fill="#000080"/><rect x="0" y="5" width="3" height="1" fill="#000"/><rect x="3" y="5" width="1" height="1" fill="#fff"/><rect x="4" y="5" width="1" height="1" fill="#000"/><rect x="5" y="5" width="1" height="1" fill="#fff"/><rect x="6" y="5" width="1" height="1" fill="#000"/><rect x="7" y="5" width="1" height="1" fill="#fff"/><rect x="8" y="5" width="1" height="1" fill="#000"/><rect x="9" y="5" width="1" height="1" fill="#fff"/><rect x="10" y="5" width="4" height="1" fill="#000"/><rect x="15" y="5" width="1" height="1" fill="#000080"/><rect x="0" y="6" width="1" height="1" fill="#000"/><rect x="1" y="6" width="1" height="1" fill="#fff"/><rect x="2" y="6" width="1" height="1" fill="#000"/><rect x="3" y="6" width="1" height="1" fill="#fff"/><rect x="4" y="6" width="1" height="1" fill="#000"/><rect x="5" y="6" width="1" height="1" fill="#fff"/><rect x="6" y="6" width="1" height="1" fill="#000"/><rect x="7" y="6" width="1" height="1" fill="#fff"/><rect x="8" y="6" width="1" height="1" fill="#000"/><rect x="9" y="6" width="1" height="1" fill="#fff"/><rect x="10" y="6" width="1" height="1" fill="#000"/><rect x="0" y="7" width="1" height="1" fill="#000"/><rect x="1" y="7" width="4" height="1" fill="#fff"/><rect x="5" y="7" width="1" height="1" fill="#000"/><rect x="6" y="7" width="1" height="1" fill="#fff"/><rect x="7" y="7" width="1" height="1" fill="#000"/><rect x="8" y="7" width="1" height="1" fill="#fff"/><rect x="9" y="7" width="2" height="1" fill="#000"/><rect x="0" y="8" width="1" height="1" fill="#000"/><rect x="1" y="8" width="1" height="1" fill="#fff"/><rect x="2" y="8" width="3" height="1" fill="#808080"/><rect x="5" y="8" width="1" height="1" fill="#fff"/><rect x="6" y="8" width="3" height="1" fill="#808080"/><rect x="9" y="8" width="1" height="1" fill="#fff"/><rect x="10" y="8" width="1" height="1" fill="#000"/><rect x="0" y="9" width="1" height="1" fill="#000"/><rect x="1" y="9" width="9" height="1" fill="#fff"/><rect x="10" y="9" width="1" height="1" fill="#000"/><rect x="0" y="10" width="1" height="1" fill="#000"/><rect x="1" y="10" width="1" height="1" fill="#fff"/><rect x="2" y="10" width="3" height="1" fill="#808080"/><rect x="5" y="10" width="1" height="1" fill="#fff"/><rect x="6" y="10" width="3" height="1" fill="#808080"/><rect x="9" y="10" width="1" height="1" fill="#fff"/><rect x="10" y="10" width="1" height="1" fill="#000"/><rect x="0" y="11" width="1" height="1" fill="#000"/><rect x="1" y="11" width="9" height="1" fill="#fff"/><rect x="10" y="11" width="1" height="1" fill="#000"/><rect x="0" y="12" width="11" height="1" fill="#000"/></svg>
<div class="a" style="left:432px;top:216px;width:1px;height:18px;background:#808080"></div><div class="a" style="left:433px;top:216px;width:1px;height:18px;background:#fff"></div>
<svg style="left:440px;top:216px" width="17" height="16" viewBox="0 0 17 16"><rect x="5" y="1" width="1" height="1" fill="#fff"/><rect x="7" y="1" width="3" height="1" fill="#000"/><rect x="4" y="2" width="1" height="1" fill="#fff"/><rect x="6" y="2" width="5" height="1" fill="#000"/><rect x="6" y="3" width="6" height="1" fill="#000"/><rect x="3" y="4" width="10" height="1" fill="#000"/><rect x="3" y="5" width="2" height="1" fill="#000"/><rect x="5" y="5" width="2" height="1" fill="#c0c0c0"/><rect x="7" y="5" width="7" height="1" fill="#000"/><rect x="1" y="6" width="1" height="1" fill="#fff"/><rect x="3" y="6" width="1" height="1" fill="#000"/><rect x="4" y="6" width="4" height="1" fill="#c0c0c0"/><rect x="8" y="6" width="7" height="1" fill="#000"/><rect x="0" y="7" width="1" height="1" fill="#fff"/><rect x="2" y="7" width="3" height="1" fill="#000"/><rect x="5" y="7" width="4" height="1" fill="#c0c0c0"/><rect x="9" y="7" width="6" height="1" fill="#000"/><rect x="1" y="8" width="5" height="1" fill="#000"/><rect x="6" y="8" width="3" height="1" fill="#c0c0c0"/><rect x="9" y="8" width="6" height="1" fill="#000"/><rect x="1" y="9" width="6" height="1" fill="#000"/><rect x="7" y="9" width="3" height="1" fill="#c0c0c0"/><rect x="10" y="9" width="4" height="1" fill="#000"/><rect x="1" y="10" width="7" height="1" fill="#000"/><rect x="8" y="10" width="2" height="1" fill="#c0c0c0"/><rect x="10" y="10" width="3" height="1" fill="#000"/><rect x="2" y="11" width="9" height="1" fill="#000"/><rect x="3" y="12" width="9" height="1" fill="#000"/><rect x="5" y="13" width="7" height="1" fill="#000"/><rect x="7" y="14" width="5" height="1" fill="#000"/><rect x="8" y="15" width="3" height="1" fill="#000"/></svg>
<svg style="left:465px;top:217px" width="17" height="15" viewBox="0 0 17 15"><rect x="5" y="0" width="7" height="1" fill="#f00"/><rect x="5" y="1" width="7" height="1" fill="#f00"/><rect x="8" y="2" width="1" height="1" fill="#000"/><rect x="6" y="3" width="2" height="1" fill="#000"/><rect x="9" y="3" width="2" height="1" fill="#000"/><rect x="4" y="4" width="2" height="1" fill="#000"/><rect x="11" y="4" width="2" height="1" fill="#000"/><rect x="3" y="5" width="1" height="1" fill="#000"/><rect x="13" y="5" width="1" height="1" fill="#000"/><rect x="0" y="6" width="7" height="1" fill="#0f0"/><rect x="10" y="6" width="7" height="1" fill="#000080"/><rect x="0" y="7" width="7" height="1" fill="#0f0"/><rect x="10" y="7" width="7" height="1" fill="#000080"/><rect x="3" y="8" width="1" height="1" fill="#000"/><rect x="3" y="9" width="1" height="1" fill="#000"/><rect x="3" y="10" width="1" height="1" fill="#000"/><rect x="3" y="11" width="1" height="1" fill="#000"/><rect x="0" y="12" width="7" height="1" fill="#fff"/><rect x="0" y="13" width="7" height="1" fill="#fff"/><rect x="0" y="14" width="1" height="1" fill="#000"/></svg>
<svg style="left:489px;top:217px" width="17" height="16" viewBox="0 0 17 16"><rect x="1" y="0" width="4" height="1" fill="#000080"/><rect x="12" y="0" width="4" height="1" fill="#000080"/><rect x="1" y="1" width="4" height="1" fill="#000080"/><rect x="12" y="1" width="4" height="1" fill="#000080"/><rect x="1" y="2" width="4" height="1" fill="#000080"/><rect x="12" y="2" width="4" height="1" fill="#000080"/><rect x="1" y="3" width="4" height="1" fill="#000080"/><rect x="5" y="3" width="1" height="1" fill="#000"/><rect x="11" y="3" width="1" height="1" fill="#000"/><rect x="12" y="3" width="4" height="1" fill="#000080"/><rect x="6" y="4" width="1" height="1" fill="#000"/><rect x="10" y="4" width="1" height="1" fill="#000"/><rect x="7" y="5" width="1" height="1" fill="#000"/><rect x="9" y="5" width="1" height="1" fill="#000"/><rect x="6" y="6" width="4" height="1" fill="#f00"/><rect x="6" y="7" width="4" height="1" fill="#f00"/><rect x="6" y="8" width="4" height="1" fill="#f00"/><rect x="6" y="9" width="4" height="1" fill="#f00"/><rect x="5" y="10" width="1" height="1" fill="#000"/><rect x="10" y="10" width="1" height="1" fill="#000"/><rect x="4" y="11" width="1" height="1" fill="#000"/><rect x="11" y="11" width="1" height="1" fill="#000"/><rect x="0" y="12" width="4" height="1" fill="#000080"/><rect x="12" y="12" width="4" height="1" fill="#000080"/><rect x="0" y="13" width="4" height="1" fill="#000080"/><rect x="12" y="13" width="4" height="1" fill="#000080"/><rect x="0" y="14" width="4" height="1" fill="#000080"/><rect x="12" y="14" width="4" height="1" fill="#000080"/><rect x="0" y="15" width="4" height="1" fill="#000080"/><rect x="12" y="15" width="4" height="1" fill="#000080"/></svg>
<svg style="left:513px;top:218px" width="16" height="14" viewBox="0 0 16 14"><rect x="0" y="0" width="15" height="1" fill="#808080"/><rect x="0" y="1" width="1" height="1" fill="#808080"/><rect x="1" y="1" width="13" height="1" fill="#fff"/><rect x="14" y="1" width="1" height="1" fill="#808080"/><rect x="15" y="1" width="1" height="1" fill="#fff"/><rect x="0" y="2" width="1" height="1" fill="#808080"/><rect x="1" y="2" width="1" height="1" fill="#fff"/><rect x="2" y="2" width="11" height="1" fill="#808080"/><rect x="13" y="2" width="1" height="1" fill="#fff"/><rect x="14" y="2" width="1" height="1" fill="#808080"/><rect x="15" y="2" width="1" height="1" fill="#fff"/><rect x="0" y="3" width="1" height="1" fill="#808080"/><rect x="1" y="3" width="1" height="1" fill="#fff"/><rect x="2" y="3" width="11" height="1" fill="#808080"/><rect x="13" y="3" width="1" height="1" fill="#fff"/><rect x="14" y="3" width="1" height="1" fill="#808080"/><rect x="15" y="3" width="1" height="1" fill="#fff"/><rect x="0" y="4" width="1" height="1" fill="#808080"/><rect x="1" y="4" width="1" height="1" fill="#fff"/><rect x="2" y="4" width="11" height="1" fill="#808080"/><rect x="13" y="4" width="1" height="1" fill="#fff"/><rect x="14" y="4" width="1" height="1" fill="#808080"/><rect x="15" y="4" width="1" height="1" fill="#fff"/><rect x="0" y="5" width="1" height="1" fill="#808080"/><rect x="1" y="5" width="1" height="1" fill="#fff"/><rect x="2" y="5" width="11" height="1" fill="#808080"/><rect x="13" y="5" width="1" height="1" fill="#fff"/><rect x="14" y="5" width="1" height="1" fill="#808080"/><rect x="15" y="5" width="1" height="1" fill="#fff"/><rect x="0" y="6" width="1" height="1" fill="#808080"/><rect x="1" y="6" width="1" height="1" fill="#fff"/><rect x="2" y="6" width="11" height="1" fill="#808080"/><rect x="13" y="6" width="1" height="1" fill="#fff"/><rect x="14" y="6" width="1" height="1" fill="#808080"/><rect x="15" y="6" width="1" height="1" fill="#fff"/><rect x="0" y="7" width="1" height="1" fill="#808080"/><rect x="1" y="7" width="1" height="1" fill="#fff"/><rect x="2" y="7" width="11" height="1" fill="#808080"/><rect x="13" y="7" width="1" height="1" fill="#fff"/><rect x="14" y="7" width="1" height="1" fill="#808080"/><rect x="15" y="7" width="1" height="1" fill="#fff"/><rect x="0" y="8" width="1" height="1" fill="#808080"/><rect x="1" y="8" width="13" height="1" fill="#fff"/><rect x="14" y="8" width="1" height="1" fill="#808080"/><rect x="15" y="8" width="1" height="1" fill="#fff"/><rect x="0" y="9" width="1" height="1" fill="#808080"/><rect x="1" y="9" width="1" height="1" fill="#fff"/><rect x="2" y="9" width="1" height="1" fill="#808080"/><rect x="3" y="9" width="9" height="1" fill="#fff"/><rect x="12" y="9" width="1" height="1" fill="#808080"/><rect x="13" y="9" width="1" height="1" fill="#fff"/><rect x="14" y="9" width="1" height="1" fill="#808080"/><rect x="15" y="9" width="1" height="1" fill="#fff"/><rect x="0" y="10" width="15" height="1" fill="#808080"/><rect x="15" y="10" width="1" height="1" fill="#fff"/><rect x="1" y="11" width="1" height="1" fill="#fff"/><rect x="2" y="11" width="11" height="1" fill="#808080"/><rect x="13" y="11" width="2" height="1" fill="#fff"/><rect x="2" y="12" width="11" height="1" fill="#808080"/><rect x="13" y="12" width="1" height="1" fill="#fff"/><rect x="2" y="13" width="12" height="1" fill="#fff"/></svg>
<svg style="left:539px;top:218px" width="15" height="14" viewBox="0 0 15 14"><rect x="6" y="0" width="3" height="1" fill="#808080"/><rect x="0" y="1" width="3" height="1" fill="#808080"/><rect x="6" y="1" width="3" height="1" fill="#808080"/><rect x="9" y="1" width="1" height="1" fill="#fff"/><rect x="0" y="2" width="9" height="1" fill="#808080"/><rect x="9" y="2" width="1" height="1" fill="#fff"/><rect x="0" y="3" width="9" height="1" fill="#808080"/><rect x="9" y="3" width="1" height="1" fill="#fff"/><rect x="0" y="4" width="3" height="1" fill="#808080"/><rect x="3" y="4" width="1" height="1" fill="#fff"/><rect x="5" y="4" width="3" height="1" fill="#808080"/><rect x="8" y="4" width="1" height="1" fill="#fff"/><rect x="11" y="4" width="3" height="1" fill="#808080"/><rect x="1" y="5" width="2" height="1" fill="#fff"/><rect x="5" y="5" width="3" height="1" fill="#808080"/><rect x="8" y="5" width="1" height="1" fill="#fff"/><rect x="11" y="5" width="3" height="1" fill="#808080"/><rect x="14" y="5" width="1" height="1" fill="#fff"/><rect x="5" y="6" width="3" height="1" fill="#808080"/><rect x="8" y="6" width="1" height="1" fill="#fff"/><rect x="11" y="6" width="3" height="1" fill="#808080"/><rect x="14" y="6" width="1" height="1" fill="#fff"/><rect x="5" y="7" width="3" height="1" fill="#808080"/><rect x="8" y="7" width="1" height="1" fill="#fff"/><rect x="11" y="7" width="3" height="1" fill="#808080"/><rect x="14" y="7" width="1" height="1" fill="#fff"/><rect x="5" y="8" width="3" height="1" fill="#808080"/><rect x="8" y="8" width="1" height="1" fill="#fff"/><rect x="11" y="8" width="3" height="1" fill="#808080"/><rect x="14" y="8" width="1" height="1" fill="#fff"/><rect x="5" y="9" width="3" height="1" fill="#808080"/><rect x="8" y="9" width="1" height="1" fill="#fff"/><rect x="11" y="9" width="3" height="1" fill="#808080"/><rect x="14" y="9" width="1" height="1" fill="#fff"/><rect x="5" y="10" width="3" height="1" fill="#808080"/><rect x="8" y="10" width="1" height="1" fill="#fff"/><rect x="11" y="10" width="3" height="1" fill="#808080"/><rect x="14" y="10" width="1" height="1" fill="#fff"/><rect x="4" y="11" width="5" height="1" fill="#808080"/><rect x="9" y="11" width="1" height="1" fill="#fff"/><rect x="11" y="11" width="3" height="1" fill="#808080"/><rect x="14" y="11" width="1" height="1" fill="#fff"/><rect x="4" y="12" width="5" height="1" fill="#808080"/><rect x="9" y="12" width="1" height="1" fill="#fff"/><rect x="11" y="12" width="3" height="1" fill="#808080"/><rect x="14" y="12" width="1" height="1" fill="#fff"/><rect x="5" y="13" width="5" height="1" fill="#fff"/><rect x="12" y="13" width="3" height="1" fill="#fff"/></svg>
<div class="a" style="left:560px;top:216px;width:1px;height:18px;background:#808080"></div><div class="a" style="left:561px;top:216px;width:1px;height:18px;background:#fff"></div>
<div class="a" style="left:5px;top:240px;width:619px;height:1px;background:#000"></div>
<div class="a" style="left:5px;top:241px;width:1px;height:173px;background:#000"></div>
<div class="a" style="left:6px;top:241px;width:18px;height:172px;background:#c0c0c0"></div>
<div class="a" style="left:6px;top:241px;width:18px;height:1px;background:#dfdfdf"></div><div class="a" style="left:6px;top:241px;width:1px;height:172px;background:#dfdfdf"></div>
<div class="a" style="left:24px;top:241px;width:2px;height:172px;background:#000"></div>
<div class="a" style="left:6px;top:298px;width:18px;height:1px;background:#000"></div>
<div class="a" style="left:6px;top:300px;width:18px;height:1px;background:#000"></div>
<div class="a" style="left:6px;top:299px;width:18px;height:1px;background:#ff0"></div>
<div class="a" style="left:6px;top:297px;width:18px;height:1px;background:#dfdfdf"></div>
<div class="a" style="left:6px;top:301px;width:18px;height:1px;background:#dfdfdf"></div>
<div class="a" style="left:6px;top:327px;width:18px;height:1px;background:#000"></div>
<div class="a" style="left:6px;top:328px;width:18px;height:1px;background:#000"></div>
<div class="a" style="left:6px;top:329px;width:18px;height:1px;background:#ff0"></div>
<div class="a" style="left:6px;top:330px;width:18px;height:1px;background:#000"></div>
<div class="a" style="left:6px;top:331px;width:18px;height:1px;background:#dfdfdf"></div>
<div class="a" style="left:6px;top:332px;width:18px;height:1px;background:#dfdfdf"></div>
<div class="a" style="left:6px;top:333px;width:18px;height:1px;background:#000"></div>
<div class="a" style="left:6px;top:334px;width:18px;height:1px;background:#000"></div>
<div class="a" style="left:6px;top:335px;width:18px;height:1px;background:#ff0"></div>
<div class="a" style="left:6px;top:336px;width:18px;height:1px;background:#000"></div>
<div class="a" style="left:6px;top:337px;width:18px;height:1px;background:#dfdfdf"></div>
<div class="a" style="left:6px;top:338px;width:18px;height:1px;background:#dfdfdf"></div>
<div class="a" style="left:6px;top:339px;width:18px;height:1px;background:#000"></div>
<div class="a" style="left:6px;top:340px;width:18px;height:1px;background:#ff0"></div>
<div class="a" style="left:6px;top:341px;width:18px;height:1px;background:#000"></div>
<div class="a" style="left:6px;top:342px;width:18px;height:1px;background:#ff0"></div>
<div class="a" style="left:6px;top:343px;width:18px;height:1px;background:#000"></div>
<div class="a" style="left:6px;top:344px;width:18px;height:1px;background:#dfdfdf"></div>
<div class="a" style="left:6px;top:345px;width:18px;height:1px;background:#000"></div>
<div class="a" style="left:6px;top:346px;width:18px;height:1px;background:#ff0"></div>
<div class="a" style="left:6px;top:347px;width:18px;height:1px;background:#000"></div>
<div class="a" style="left:6px;top:348px;width:18px;height:1px;background:#ff0"></div>
<div class="a" style="left:6px;top:349px;width:18px;height:1px;background:#000"></div>
<div class="a" style="left:6px;top:326px;width:18px;height:1px;background:#dfdfdf"></div>
<div class="a" style="left:6px;top:350px;width:18px;height:1px;background:#dfdfdf"></div>
<div class="a" style="left:6px;top:364px;width:18px;height:1px;background:#000"></div>
<div class="a" style="left:6px;top:366px;width:18px;height:1px;background:#000"></div>
<div class="a" style="left:6px;top:365px;width:18px;height:1px;background:#ff0"></div>
<div class="a" style="left:6px;top:363px;width:18px;height:1px;background:#dfdfdf"></div>
<div class="a" style="left:6px;top:367px;width:18px;height:1px;background:#dfdfdf"></div>
<div class="a" style="left:26px;top:241px;width:582px;height:156px;background:#fff"></div>
<div class="a" style="left:74px;top:255px;width:456px;height:14px;background:#ff0"></div>
<div class="a" style="left:74px;top:353px;width:456px;height:14px;background:#ff0"></div>
<div class="mono" style="left:26px;top:242px">071700                                                                  00095300
087400 C100-CONVERT-SALES-DATE.                                         00114000
087500                                                                  00114100
087600     SET NDX-DATE TO 1.                                           00114200
087700     SEARCH WS-DATE-TABLE                                         00114300
087800         AT END                                                   00114400
087900         MOVE SALES-TRANS-DATE TO WS-DISPLAY-DATE.                00114500
089800                                                                  00116400
089900 C100-CONVERT-SALES-DATE-EXIT.                                    00116500
090000     EXIT.                                                        00116600
147100<span class="st">*</span>                                                                 0176200</div>
<div class="a dith" style="left:608px;top:241px;width:16px;height:156px"></div>
<div class="a rb" style="left:608px;top:241px;width:16px;height:16px;"></div><svg style="left:612px;top:247px" width="7" height="4" viewBox="0 0 7 4"><rect x="3" y="0" width="1" height="1" fill="#000"/><rect x="2" y="1" width="3" height="1" fill="#000"/><rect x="1" y="2" width="5" height="1" fill="#000"/><rect x="0" y="3" width="7" height="1" fill="#000"/></svg>
<div class="a rb" style="left:608px;top:311px;width:16px;height:16px;"></div>
<div class="a rb" style="left:608px;top:381px;width:16px;height:16px;"></div><svg style="left:612px;top:387px" width="7" height="4" viewBox="0 0 7 4"><rect x="0" y="0" width="7" height="1" fill="#000"/><rect x="1" y="1" width="5" height="1" fill="#000"/><rect x="2" y="2" width="3" height="1" fill="#000"/><rect x="3" y="3" width="1" height="1" fill="#000"/></svg>
<div class="a dith" style="left:26px;top:397px;width:582px;height:16px"></div>
<div class="a rb" style="left:26px;top:397px;width:16px;height:16px;"></div><svg style="left:31px;top:401px" width="4" height="7" viewBox="0 0 4 7"><rect x="3" y="0" width="1" height="1" fill="#000"/><rect x="2" y="1" width="2" height="1" fill="#000"/><rect x="1" y="2" width="3" height="1" fill="#000"/><rect x="0" y="3" width="4" height="1" fill="#000"/><rect x="1" y="4" width="3" height="1" fill="#000"/><rect x="2" y="5" width="2" height="1" fill="#000"/><rect x="3" y="6" width="1" height="1" fill="#000"/></svg>
<div class="a rb" style="left:42px;top:397px;width:16px;height:16px;"></div>
<div class="a rb" style="left:592px;top:397px;width:16px;height:16px;"></div><svg style="left:598px;top:401px" width="4" height="7" viewBox="0 0 4 7"><rect x="0" y="0" width="1" height="1" fill="#000"/><rect x="0" y="1" width="2" height="1" fill="#000"/><rect x="0" y="2" width="3" height="1" fill="#000"/><rect x="0" y="3" width="4" height="1" fill="#000"/><rect x="0" y="4" width="3" height="1" fill="#000"/><rect x="0" y="5" width="2" height="1" fill="#000"/><rect x="0" y="6" width="1" height="1" fill="#000"/></svg>
<div class="a" style="left:608px;top:397px;width:16px;height:16px;background:#c0c0c0"></div>
<div class="a" style="left:5px;top:413px;width:621px;height:2px;background:#000"></div>
<div class="a sk" style="left:4px;top:417px;width:494px;height:19px;background:#fff;"></div>
<div class="a" style="left:5px;top:418px;width:492px;height:1px;background:#000"></div><div class="a" style="left:5px;top:418px;width:1px;height:17px;background:#000"></div>
<div class="ui" style="left:9px;top:420px;transform:scaleX(0.91)">C:\TPS\SAMPLES\REVOLVE\SAMPLEAPP\COBOL\BATCH2.CBL</div>
<div class="a rb" style="left:480px;top:419px;width:16px;height:16px;"></div><svg style="left:484px;top:425px" width="7" height="4" viewBox="0 0 7 4"><rect x="0" y="0" width="7" height="1" fill="#000"/><rect x="1" y="1" width="5" height="1" fill="#000"/><rect x="2" y="2" width="3" height="1" fill="#000"/><rect x="3" y="3" width="1" height="1" fill="#000"/></svg>
<div class="a sk" style="left:499px;top:417px;width:58px;height:19px;background:transparent;"></div>
<div class="ui" style="left:503px;top:420px;transform:scaleX(0.89)">541:48</div>
<div class="a sk" style="left:559px;top:417px;width:30px;height:19px;background:transparent;"></div>
<div class="ui" style="left:561px;top:420px;transform:scaleX(0.87)">INS</div>
<div class="a sk" style="left:589px;top:417px;width:37px;height:19px;background:transparent;"></div>
<div class="ui" style="left:9px;top:442px;transform:scaleX(0.89)">cobol_label_para : C100-CONVERT-SALES-DATE  {BATCH2.CBL at 540,8 }  Scope: 1 of 21</div>
<div class="a" style="left:4px;top:462px;width:622px;height:1px;background:#000"></div><div class="a" style="left:4px;top:463px;width:623px;height:1px;background:#dfdfdf"></div><div class="a" style="left:626px;top:210px;width:1px;height:254px;background:#dfdfdf"></div>
</body></html>
